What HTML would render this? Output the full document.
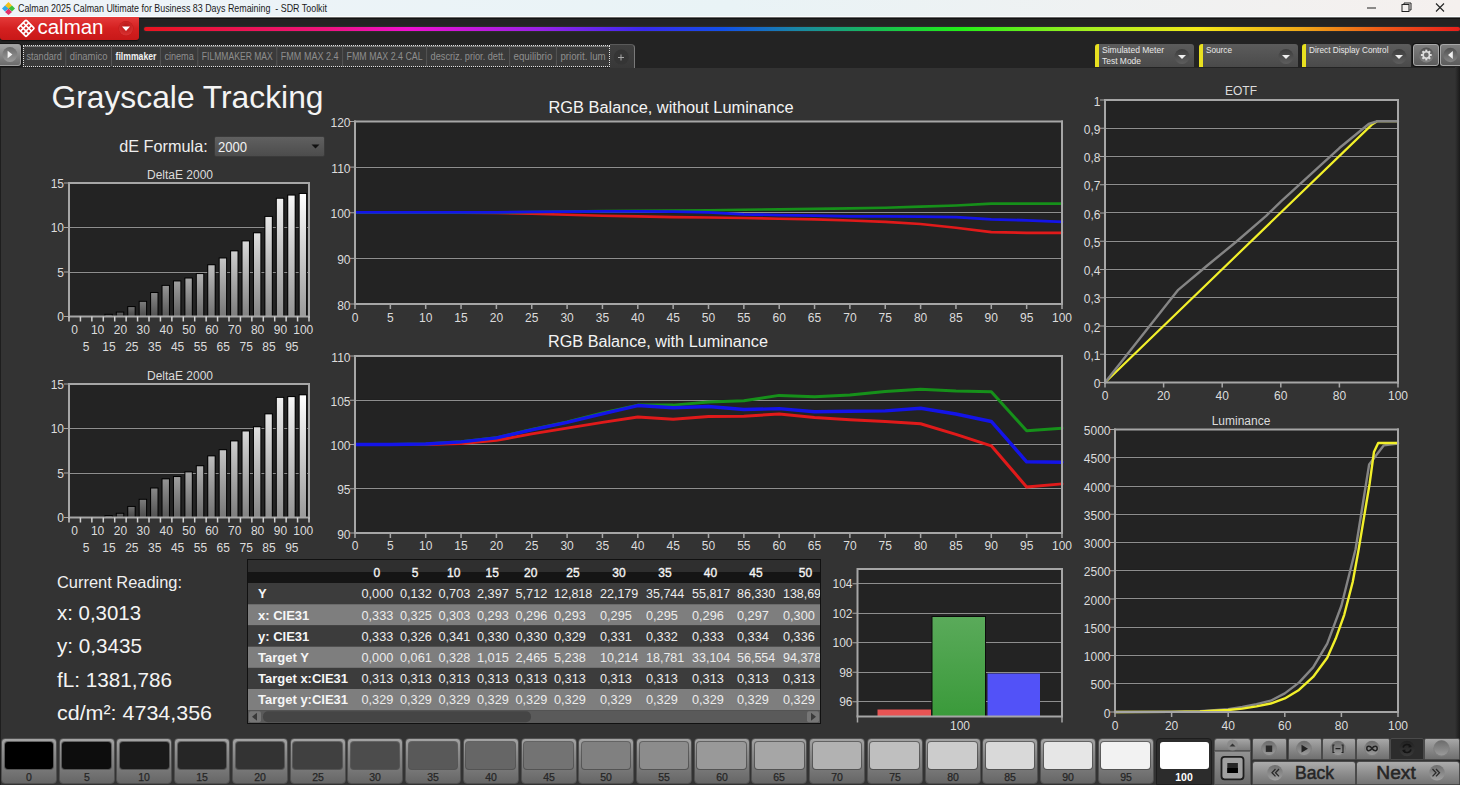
<!DOCTYPE html>
<html><head><meta charset="utf-8">
<style>
*{margin:0;padding:0;box-sizing:border-box}
html,body{width:1460px;height:785px;overflow:hidden;background:#333;font-family:"Liberation Sans",sans-serif}
.a{position:absolute}
svg text{font-family:"Liberation Sans",sans-serif}
</style></head><body>

<div class="a" style="left:0;top:0;width:1460px;height:17px;background:linear-gradient(90deg,#eef3f8,#e9f3f6 50%,#f5f0ee);box-shadow:inset 0 -1px 0 #fbfdfd;"></div>
<svg class="a" style="left:1px;top:1px" width="15" height="15" viewBox="0 0 15 15">
<path d="M7.5 1 L11 4.5 L7.5 8 L4 4.5Z" fill="#f2c21a"/>
<path d="M11 4.5 L14 7.5 L11 10.5 L7.5 7.5Z" fill="#3cbf3c"/>
<path d="M7.5 7.5 L11 11 L7.5 14 L4 11Z" fill="#e0306a"/>
<path d="M4 4.5 L7.5 7.5 L4 10.5 L1 7.5Z" fill="#30a8e8"/>
</svg>
<svg class="a" style="left:0;top:0" width="400" height="17"><text x="18" y="12.3" font-size="11" fill="#1a1a1a" textLength="309" lengthAdjust="spacingAndGlyphs">Calman 2025 Calman Ultimate for Business 83 Days Remaining &#160;- SDR Toolkit</text></svg>
<svg class="a" style="left:1360px;top:0" width="100" height="17">
<rect x="7" y="7.5" width="9" height="1" fill="#222"/>
<rect x="42" y="4.5" width="7" height="7" fill="none" stroke="#222" stroke-width="1"/>
<path d="M44 4.5 V3 H51 V10 H49.5" fill="none" stroke="#222" stroke-width="1"/>
<path d="M76 3.5 L84 11.5 M84 3.5 L76 11.5" stroke="#222" stroke-width="1.1"/>
</svg>
<div class="a" style="left:0;top:17px;width:1460px;height:51px;background:linear-gradient(#6a6a6a 0,#6a6a6a 1px,#121212 1px,#121212 2px,#232323 2px)"></div>
<div class="a" style="left:0;top:17px;width:139px;height:23px;background:linear-gradient(#e53a3a,#d42020 50%,#c81818);border-radius:0 0 3px 3px;box-shadow:0 1px 1px #111"></div>
<svg class="a" style="left:0;top:17px" width="139" height="23" viewBox="0 0 139 23">
<g transform="translate(26,11.3) rotate(45)" fill="none" stroke="#fff" stroke-width="1.7">
<rect x="-5.9" y="-5.9" width="11.8" height="11.8" rx="1"/>
<path d="M-1.97 -5.9 V5.9 M1.97 -5.9 V5.9 M-5.9 -1.97 H5.9 M-5.9 1.97 H5.9"/>
</g>
<text x="37.5" y="17" font-size="19.5" fill="#fff" textLength="66" lengthAdjust="spacingAndGlyphs">calman</text>
<circle cx="126" cy="11.5" r="7.5" fill="#c01a1a"/>
<circle cx="126" cy="11.5" r="7" fill="url(#rg1)"/>
<defs><radialGradient id="rg1" cx="50%" cy="35%" r="60%"><stop offset="0" stop-color="#b81515"/><stop offset="1" stop-color="#d83030"/></radialGradient></defs>
<path d="M122 9.5 H130 L126 14Z" fill="#fff"/>
</svg>
<div class="a" style="left:144px;top:26.5px;width:1316px;height:4px;border-radius:2px;background:linear-gradient(90deg,#e8141e 0%,#ee1480 14%,#f010d0 20%,#9a22e8 30%,#3a2af0 38%,#1250e8 44%,#1a8aa0 50%,#18c050 56%,#22ee18 62%,#a8f020 72%,#f4ea18 80%,#f0a818 88%,#ee5a18 94%,#e8201c 100%);box-shadow:0 0 2px rgba(255,255,255,.15)"></div>
<div class="a" style="left:0;top:44px;width:21px;height:22px;border-radius:0 3px 3px 0;background:linear-gradient(#a4a4a4,#888 50%,#6c6c6c);border:1px solid #a0a0a0;border-left:none;box-shadow:0 0 0 1px #151515"></div>
<svg class="a" style="left:0;top:44px" width="21" height="22"><defs><linearGradient id="pcg" x1="0" y1="0" x2="0" y2="1"><stop offset="0" stop-color="#6a6a6a"/><stop offset="1" stop-color="#9a9a9a"/></linearGradient></defs><circle cx="9.9" cy="10.5" r="7.4" fill="url(#pcg)"/><path d="M7.6 6.8 L12.4 10.5 L7.6 14.2Z" fill="#f4f4f4"/></svg>
<div class="a" style="left:23px;top:45px;width:587px;height:22px;background:#3a3a3a;border:1px dotted #e0e0e0;box-shadow:inset 0 1px 0 #777"></div>
<svg class="a" style="left:0;top:44.5px" width="640" height="23"><text x="26.5" y="14.6" font-size="10" font-weight="normal" fill="#8e8e8e" textLength="35.3" lengthAdjust="spacingAndGlyphs">standard</text><rect x="65.3" y="1" width="1" height="21" fill="#555"/><text x="69.8" y="14.6" font-size="10" font-weight="normal" fill="#8e8e8e" textLength="37.7" lengthAdjust="spacingAndGlyphs">dinamico</text><rect x="111.0" y="1" width="1" height="21" fill="#555"/><text x="115.5" y="14.6" font-size="10" font-weight="bold" fill="#f2f2f2" textLength="40.9" lengthAdjust="spacingAndGlyphs">filmmaker</text><rect x="159.9" y="1" width="1" height="21" fill="#555"/><text x="164.4" y="14.6" font-size="10" font-weight="normal" fill="#8e8e8e" textLength="29.4" lengthAdjust="spacingAndGlyphs">cinema</text><rect x="197.3" y="1" width="1" height="21" fill="#555"/><text x="201.8" y="14.6" font-size="10" font-weight="normal" fill="#8e8e8e" textLength="71.0" lengthAdjust="spacingAndGlyphs">FILMMAKER MAX</text><rect x="276.3" y="1" width="1" height="21" fill="#555"/><text x="280.8" y="14.6" font-size="10" font-weight="normal" fill="#8e8e8e" textLength="57.8" lengthAdjust="spacingAndGlyphs">FMM MAX 2.4</text><rect x="342.1" y="1" width="1" height="21" fill="#555"/><text x="346.6" y="14.6" font-size="10" font-weight="normal" fill="#8e8e8e" textLength="76.0" lengthAdjust="spacingAndGlyphs">FMM MAX 2.4 CAL</text><rect x="426.1" y="1" width="1" height="21" fill="#555"/><text x="430.6" y="14.6" font-size="10" font-weight="normal" fill="#8e8e8e" textLength="75.0" lengthAdjust="spacingAndGlyphs">descriz. prior. dett.</text><rect x="509.1" y="1" width="1" height="21" fill="#555"/><text x="513.6" y="14.6" font-size="10" font-weight="normal" fill="#8e8e8e" textLength="38.8" lengthAdjust="spacingAndGlyphs">equilibrio</text><rect x="555.9" y="1" width="1" height="21" fill="#555"/><text x="560.4" y="14.6" font-size="10" font-weight="normal" fill="#8e8e8e" textLength="45.3" lengthAdjust="spacingAndGlyphs">priorit. lum</text></svg>
<div class="a" style="left:610px;top:44px;width:25px;height:24px;background:linear-gradient(#404040,#383838);border-radius:0 4px 0 0;border-top:1px solid #5a5a5a;border-right:1px solid #7a7a7a"></div>
<svg class="a" style="left:610px;top:44px" width="25" height="24"><circle cx="11.3" cy="13" r="7.5" fill="#353535"/><path d="M8 13.5 H14 M11 10.5 V16.5" stroke="#a8a8a8" stroke-width="1"/></svg>
<div class="a" style="left:1095px;top:44px;width:99px;height:23px;border-radius:3px 3px 0 0;background:linear-gradient(#5c5c5c,#4a4a4a);border-left:4px solid #e8e020"></div><svg class="a" style="left:1095px;top:44px" width="99" height="23"><text x="7" y="9.2" font-size="9.5" fill="#e8e8e8" textLength="62" lengthAdjust="spacingAndGlyphs">Simulated Meter</text><text x="7" y="20.0" font-size="9.5" fill="#e8e8e8" textLength="39" lengthAdjust="spacingAndGlyphs">Test Mode</text><defs><linearGradient id="dcg1095" x1="0" y1="0" x2="0" y2="1"><stop offset="0" stop-color="#3c3c3c"/><stop offset="1" stop-color="#5e5e5e"/></linearGradient></defs><circle cx="87" cy="12.5" r="7.5" fill="url(#dcg1095)"/><path d="M83 11 H91 L87 15Z" fill="#f0f0f0"/></svg>
<div class="a" style="left:1199px;top:44px;width:99px;height:23px;border-radius:3px 3px 0 0;background:linear-gradient(#5c5c5c,#4a4a4a);border-left:4px solid #e8e020"></div><svg class="a" style="left:1199px;top:44px" width="99" height="23"><text x="7" y="9.2" font-size="9.5" fill="#e8e8e8" textLength="26" lengthAdjust="spacingAndGlyphs">Source</text><defs><linearGradient id="dcg1199" x1="0" y1="0" x2="0" y2="1"><stop offset="0" stop-color="#3c3c3c"/><stop offset="1" stop-color="#5e5e5e"/></linearGradient></defs><circle cx="87" cy="12.5" r="7.5" fill="url(#dcg1199)"/><path d="M83 11 H91 L87 15Z" fill="#f0f0f0"/></svg>
<div class="a" style="left:1302px;top:44px;width:109px;height:23px;border-radius:3px 3px 0 0;background:linear-gradient(#5c5c5c,#4a4a4a);border-left:4px solid #e8e020"></div><svg class="a" style="left:1302px;top:44px" width="109" height="23"><text x="7" y="9.2" font-size="9.5" fill="#e8e8e8" textLength="79.5" lengthAdjust="spacingAndGlyphs">Direct Display Control</text><defs><linearGradient id="dcg1302" x1="0" y1="0" x2="0" y2="1"><stop offset="0" stop-color="#3c3c3c"/><stop offset="1" stop-color="#5e5e5e"/></linearGradient></defs><circle cx="97" cy="12.5" r="7.5" fill="url(#dcg1302)"/><path d="M93 11 H101 L97 15Z" fill="#f0f0f0"/></svg>
<div class="a" style="left:1413px;top:44px;width:26px;height:22px;border-radius:3px;background:linear-gradient(#7e7e7e,#5c5c5c);border:1px solid #a8a8a8;box-shadow:0 0 0 1px #111"></div>
<svg class="a" style="left:1413px;top:44px" width="26" height="22"><defs><linearGradient id="gcg" x1="0" y1="0" x2="0" y2="1"><stop offset="0" stop-color="#505050"/><stop offset="1" stop-color="#858585"/></linearGradient></defs>
<circle cx="13.3" cy="11" r="7.4" fill="url(#gcg)"/><g transform="translate(13.3,11)" fill="#dedede">
<circle r="3.9"/><rect x="-1" y="-5.4" width="2" height="2.2" transform="rotate(0)"/><rect x="-1" y="-5.4" width="2" height="2.2" transform="rotate(45)"/><rect x="-1" y="-5.4" width="2" height="2.2" transform="rotate(90)"/><rect x="-1" y="-5.4" width="2" height="2.2" transform="rotate(135)"/><rect x="-1" y="-5.4" width="2" height="2.2" transform="rotate(180)"/><rect x="-1" y="-5.4" width="2" height="2.2" transform="rotate(225)"/><rect x="-1" y="-5.4" width="2" height="2.2" transform="rotate(270)"/><rect x="-1" y="-5.4" width="2" height="2.2" transform="rotate(315)"/><circle r="2.4" fill="#6c6c6c"/></g></svg>
<div class="a" style="left:1440px;top:44px;width:20px;height:22px;border-radius:3px 0 0 3px;background:linear-gradient(#7e7e7e,#5c5c5c);border:1px solid #a8a8a8;border-right:none"></div>
<svg class="a" style="left:1440px;top:44px" width="20" height="22"><circle cx="10.5" cy="11" r="7.2" fill="url(#gcg)"/><path d="M12.8 7 L8 11 L12.8 15Z" fill="#f0f0f0"/></svg>
<div class="a" style="left:0;top:67px;width:1px;height:718px;background:#1e1e1e"></div>
<div class="a" style="left:1455px;top:67px;width:5px;height:718px;background:linear-gradient(90deg,#333,#1a1a1a)"></div>
<svg class="a" style="left:0;top:67px" width="340" height="100">
<text x="51.5" y="41" font-size="31.5" fill="#f4f4f4" textLength="272" lengthAdjust="spacingAndGlyphs">Grayscale Tracking</text>
<text x="119.2" y="85" font-size="16.5" fill="#eeeeee" textLength="88.5" lengthAdjust="spacingAndGlyphs">dE Formula:</text>
</svg>
<div class="a" style="left:214px;top:136px;width:111px;height:21px;background:linear-gradient(#606060,#4c4c4c);border:1px solid #3a3a3a;border-radius:2px"></div>
<svg class="a" style="left:214px;top:136px" width="111" height="21"><text x="4" y="16.3" font-size="14" fill="#f0f0f0" textLength="29" lengthAdjust="spacingAndGlyphs">2000</text><path d="M97.5 8.5 H105.5 L101.5 12.5Z" fill="#111"/></svg>
<svg class="a" style="left:0;top:160px" width="330" height="200"><text x="180" y="19" font-size="12" fill="#dcdcdc" text-anchor="middle">DeltaE 2000</text><rect x="69" y="23" width="240" height="133.5" fill="#232323"/><rect x="69" y="111.70" width="240" height="1.6" fill="#1c1c1c"/><rect x="69" y="112" width="240" height="1" fill="#8e8e8e"/><rect x="69" y="66.70" width="240" height="1.6" fill="#1c1c1c"/><rect x="69" y="67" width="240" height="1" fill="#8e8e8e"/><defs><linearGradient id="bg183_0" x1="0" y1="0" x2="0" y2="1"><stop offset="0" stop-color="rgb(42,42,42)"/><stop offset="1" stop-color="rgb(25,25,25)"/></linearGradient><linearGradient id="bg183_1" x1="0" y1="0" x2="0" y2="1"><stop offset="0" stop-color="rgb(42,42,42)"/><stop offset="1" stop-color="rgb(25,25,25)"/></linearGradient><linearGradient id="bg183_2" x1="0" y1="0" x2="0" y2="1"><stop offset="0" stop-color="rgb(64,64,64)"/><stop offset="1" stop-color="rgb(38,38,38)"/></linearGradient><linearGradient id="bg183_3" x1="0" y1="0" x2="0" y2="1"><stop offset="0" stop-color="rgb(82,82,82)"/><stop offset="1" stop-color="rgb(49,49,49)"/></linearGradient><linearGradient id="bg183_4" x1="0" y1="0" x2="0" y2="1"><stop offset="0" stop-color="rgb(97,97,97)"/><stop offset="1" stop-color="rgb(58,58,58)"/></linearGradient><linearGradient id="bg183_5" x1="0" y1="0" x2="0" y2="1"><stop offset="0" stop-color="rgb(111,111,111)"/><stop offset="1" stop-color="rgb(67,67,67)"/></linearGradient><linearGradient id="bg183_6" x1="0" y1="0" x2="0" y2="1"><stop offset="0" stop-color="rgb(124,124,124)"/><stop offset="1" stop-color="rgb(74,74,74)"/></linearGradient><linearGradient id="bg183_7" x1="0" y1="0" x2="0" y2="1"><stop offset="0" stop-color="rgb(136,136,136)"/><stop offset="1" stop-color="rgb(81,81,81)"/></linearGradient><linearGradient id="bg183_8" x1="0" y1="0" x2="0" y2="1"><stop offset="0" stop-color="rgb(147,147,147)"/><stop offset="1" stop-color="rgb(88,88,88)"/></linearGradient><linearGradient id="bg183_9" x1="0" y1="0" x2="0" y2="1"><stop offset="0" stop-color="rgb(158,158,158)"/><stop offset="1" stop-color="rgb(95,95,95)"/></linearGradient><linearGradient id="bg183_10" x1="0" y1="0" x2="0" y2="1"><stop offset="0" stop-color="rgb(168,168,168)"/><stop offset="1" stop-color="rgb(101,101,101)"/></linearGradient><linearGradient id="bg183_11" x1="0" y1="0" x2="0" y2="1"><stop offset="0" stop-color="rgb(178,178,178)"/><stop offset="1" stop-color="rgb(107,107,107)"/></linearGradient><linearGradient id="bg183_12" x1="0" y1="0" x2="0" y2="1"><stop offset="0" stop-color="rgb(188,188,188)"/><stop offset="1" stop-color="rgb(113,113,113)"/></linearGradient><linearGradient id="bg183_13" x1="0" y1="0" x2="0" y2="1"><stop offset="0" stop-color="rgb(197,197,197)"/><stop offset="1" stop-color="rgb(118,118,118)"/></linearGradient><linearGradient id="bg183_14" x1="0" y1="0" x2="0" y2="1"><stop offset="0" stop-color="rgb(206,206,206)"/><stop offset="1" stop-color="rgb(124,124,124)"/></linearGradient><linearGradient id="bg183_15" x1="0" y1="0" x2="0" y2="1"><stop offset="0" stop-color="rgb(215,215,215)"/><stop offset="1" stop-color="rgb(129,129,129)"/></linearGradient><linearGradient id="bg183_16" x1="0" y1="0" x2="0" y2="1"><stop offset="0" stop-color="rgb(223,223,223)"/><stop offset="1" stop-color="rgb(134,134,134)"/></linearGradient><linearGradient id="bg183_17" x1="0" y1="0" x2="0" y2="1"><stop offset="0" stop-color="rgb(231,231,231)"/><stop offset="1" stop-color="rgb(139,139,139)"/></linearGradient><linearGradient id="bg183_18" x1="0" y1="0" x2="0" y2="1"><stop offset="0" stop-color="rgb(239,239,239)"/><stop offset="1" stop-color="rgb(144,144,144)"/></linearGradient><linearGradient id="bg183_19" x1="0" y1="0" x2="0" y2="1"><stop offset="0" stop-color="rgb(247,247,247)"/><stop offset="1" stop-color="rgb(148,148,148)"/></linearGradient><linearGradient id="bg183_20" x1="0" y1="0" x2="0" y2="1"><stop offset="0" stop-color="rgb(255,255,255)"/><stop offset="1" stop-color="rgb(153,153,153)"/></linearGradient></defs><rect x="104.40" y="153.83" width="8.4" height="2.67" fill="#000"/><rect x="105.40" y="154.83" width="6.4" height="1.67" fill="url(#bg183_3)"/><rect x="115.83" y="151.61" width="8.4" height="4.90" fill="#000"/><rect x="116.83" y="152.61" width="6.4" height="3.90" fill="url(#bg183_4)"/><rect x="127.26" y="146.09" width="8.4" height="10.41" fill="#000"/><rect x="128.26" y="147.09" width="6.4" height="9.41" fill="url(#bg183_5)"/><rect x="138.69" y="140.84" width="8.4" height="15.66" fill="#000"/><rect x="139.69" y="141.84" width="6.4" height="14.66" fill="url(#bg183_6)"/><rect x="150.11" y="132.02" width="8.4" height="24.48" fill="#000"/><rect x="151.11" y="133.02" width="6.4" height="23.48" fill="url(#bg183_7)"/><rect x="161.54" y="124.90" width="8.4" height="31.60" fill="#000"/><rect x="162.54" y="125.90" width="6.4" height="30.60" fill="url(#bg183_8)"/><rect x="172.97" y="120.45" width="8.4" height="36.04" fill="#000"/><rect x="173.97" y="121.45" width="6.4" height="35.04" fill="url(#bg183_9)"/><rect x="184.40" y="117.52" width="8.4" height="38.98" fill="#000"/><rect x="185.40" y="118.52" width="6.4" height="37.98" fill="url(#bg183_10)"/><rect x="195.83" y="113.07" width="8.4" height="43.43" fill="#000"/><rect x="196.83" y="114.07" width="6.4" height="42.43" fill="url(#bg183_11)"/><rect x="207.26" y="104.26" width="8.4" height="52.24" fill="#000"/><rect x="208.26" y="105.26" width="6.4" height="51.24" fill="url(#bg183_12)"/><rect x="218.69" y="97.49" width="8.4" height="59.01" fill="#000"/><rect x="219.69" y="98.49" width="6.4" height="58.01" fill="url(#bg183_13)"/><rect x="230.11" y="90.37" width="8.4" height="66.13" fill="#000"/><rect x="231.11" y="91.37" width="6.4" height="65.13" fill="url(#bg183_14)"/><rect x="241.54" y="80.41" width="8.4" height="76.09" fill="#000"/><rect x="242.54" y="81.41" width="6.4" height="75.09" fill="url(#bg183_15)"/><rect x="252.97" y="72.31" width="8.4" height="84.19" fill="#000"/><rect x="253.97" y="73.31" width="6.4" height="83.19" fill="url(#bg183_16)"/><rect x="264.40" y="55.93" width="8.4" height="100.57" fill="#000"/><rect x="265.40" y="56.93" width="6.4" height="99.57" fill="url(#bg183_17)"/><rect x="275.83" y="37.77" width="8.4" height="118.73" fill="#000"/><rect x="276.83" y="38.77" width="6.4" height="117.73" fill="url(#bg183_18)"/><rect x="287.26" y="34.57" width="8.4" height="121.93" fill="#000"/><rect x="288.26" y="35.57" width="6.4" height="120.93" fill="url(#bg183_19)"/><rect x="298.69" y="32.97" width="8.4" height="123.53" fill="#000"/><rect x="299.69" y="33.97" width="6.4" height="122.53" fill="url(#bg183_20)"/><path d="M69 156.5 V23 H309 V156.5" fill="none" stroke="#a6a6a6" stroke-width="2"/><rect x="68" y="155.5" width="242" height="2" fill="#a6a6a6"/><rect x="64" y="156.00" width="5" height="1" fill="#a6a6a6"/><text x="64" y="161.10" font-size="12" fill="#dcdcdc" text-anchor="end">0</text><rect x="64" y="111.50" width="5" height="1" fill="#a6a6a6"/><text x="64" y="116.60" font-size="12" fill="#dcdcdc" text-anchor="end">5</text><rect x="64" y="67.00" width="5" height="1" fill="#a6a6a6"/><text x="64" y="72.10" font-size="12" fill="#dcdcdc" text-anchor="end">10</text><rect x="64" y="22.50" width="5" height="1" fill="#a6a6a6"/><text x="64" y="27.60" font-size="12" fill="#dcdcdc" text-anchor="end">15</text><rect x="68.25" y="156.5" width="1.5" height="5" fill="#d0d0d0"/><rect x="79.68" y="156.5" width="1.5" height="5" fill="#d0d0d0"/><rect x="91.11" y="156.5" width="1.5" height="5" fill="#d0d0d0"/><rect x="102.54" y="156.5" width="1.5" height="5" fill="#d0d0d0"/><rect x="113.96" y="156.5" width="1.5" height="5" fill="#d0d0d0"/><rect x="125.39" y="156.5" width="1.5" height="5" fill="#d0d0d0"/><rect x="136.82" y="156.5" width="1.5" height="5" fill="#d0d0d0"/><rect x="148.25" y="156.5" width="1.5" height="5" fill="#d0d0d0"/><rect x="159.68" y="156.5" width="1.5" height="5" fill="#d0d0d0"/><rect x="171.11" y="156.5" width="1.5" height="5" fill="#d0d0d0"/><rect x="182.54" y="156.5" width="1.5" height="5" fill="#d0d0d0"/><rect x="193.96" y="156.5" width="1.5" height="5" fill="#d0d0d0"/><rect x="205.39" y="156.5" width="1.5" height="5" fill="#d0d0d0"/><rect x="216.82" y="156.5" width="1.5" height="5" fill="#d0d0d0"/><rect x="228.25" y="156.5" width="1.5" height="5" fill="#d0d0d0"/><rect x="239.68" y="156.5" width="1.5" height="5" fill="#d0d0d0"/><rect x="251.11" y="156.5" width="1.5" height="5" fill="#d0d0d0"/><rect x="262.54" y="156.5" width="1.5" height="5" fill="#d0d0d0"/><rect x="273.96" y="156.5" width="1.5" height="5" fill="#d0d0d0"/><rect x="285.39" y="156.5" width="1.5" height="5" fill="#d0d0d0"/><rect x="296.82" y="156.5" width="1.5" height="5" fill="#d0d0d0"/><rect x="308.25" y="156.5" width="1.5" height="5" fill="#d0d0d0"/><text x="74.71" y="173.5" font-size="12" fill="#dcdcdc" text-anchor="middle">0</text><text x="86.14" y="190.5" font-size="12" fill="#dcdcdc" text-anchor="middle">5</text><text x="97.57" y="173.5" font-size="12" fill="#dcdcdc" text-anchor="middle">10</text><text x="109.00" y="190.5" font-size="12" fill="#dcdcdc" text-anchor="middle">15</text><text x="120.43" y="173.5" font-size="12" fill="#dcdcdc" text-anchor="middle">20</text><text x="131.86" y="190.5" font-size="12" fill="#dcdcdc" text-anchor="middle">25</text><text x="143.29" y="173.5" font-size="12" fill="#dcdcdc" text-anchor="middle">30</text><text x="154.71" y="190.5" font-size="12" fill="#dcdcdc" text-anchor="middle">35</text><text x="166.14" y="173.5" font-size="12" fill="#dcdcdc" text-anchor="middle">40</text><text x="177.57" y="190.5" font-size="12" fill="#dcdcdc" text-anchor="middle">45</text><text x="189.00" y="173.5" font-size="12" fill="#dcdcdc" text-anchor="middle">50</text><text x="200.43" y="190.5" font-size="12" fill="#dcdcdc" text-anchor="middle">55</text><text x="211.86" y="173.5" font-size="12" fill="#dcdcdc" text-anchor="middle">60</text><text x="223.29" y="190.5" font-size="12" fill="#dcdcdc" text-anchor="middle">65</text><text x="234.71" y="173.5" font-size="12" fill="#dcdcdc" text-anchor="middle">70</text><text x="246.14" y="190.5" font-size="12" fill="#dcdcdc" text-anchor="middle">75</text><text x="257.57" y="173.5" font-size="12" fill="#dcdcdc" text-anchor="middle">80</text><text x="269.00" y="190.5" font-size="12" fill="#dcdcdc" text-anchor="middle">85</text><text x="280.43" y="173.5" font-size="12" fill="#dcdcdc" text-anchor="middle">90</text><text x="291.86" y="190.5" font-size="12" fill="#dcdcdc" text-anchor="middle">95</text><text x="303.29" y="173.5" font-size="12" fill="#dcdcdc" text-anchor="middle">100</text></svg>
<svg class="a" style="left:0;top:361px" width="330" height="200"><text x="180" y="19" font-size="12" fill="#dcdcdc" text-anchor="middle">DeltaE 2000</text><rect x="69" y="23" width="240" height="133.5" fill="#232323"/><rect x="69" y="111.70" width="240" height="1.6" fill="#1c1c1c"/><rect x="69" y="112" width="240" height="1" fill="#8e8e8e"/><rect x="69" y="66.70" width="240" height="1.6" fill="#1c1c1c"/><rect x="69" y="67" width="240" height="1" fill="#8e8e8e"/><defs><linearGradient id="bg384_0" x1="0" y1="0" x2="0" y2="1"><stop offset="0" stop-color="rgb(42,42,42)"/><stop offset="1" stop-color="rgb(25,25,25)"/></linearGradient><linearGradient id="bg384_1" x1="0" y1="0" x2="0" y2="1"><stop offset="0" stop-color="rgb(42,42,42)"/><stop offset="1" stop-color="rgb(25,25,25)"/></linearGradient><linearGradient id="bg384_2" x1="0" y1="0" x2="0" y2="1"><stop offset="0" stop-color="rgb(64,64,64)"/><stop offset="1" stop-color="rgb(38,38,38)"/></linearGradient><linearGradient id="bg384_3" x1="0" y1="0" x2="0" y2="1"><stop offset="0" stop-color="rgb(82,82,82)"/><stop offset="1" stop-color="rgb(49,49,49)"/></linearGradient><linearGradient id="bg384_4" x1="0" y1="0" x2="0" y2="1"><stop offset="0" stop-color="rgb(97,97,97)"/><stop offset="1" stop-color="rgb(58,58,58)"/></linearGradient><linearGradient id="bg384_5" x1="0" y1="0" x2="0" y2="1"><stop offset="0" stop-color="rgb(111,111,111)"/><stop offset="1" stop-color="rgb(67,67,67)"/></linearGradient><linearGradient id="bg384_6" x1="0" y1="0" x2="0" y2="1"><stop offset="0" stop-color="rgb(124,124,124)"/><stop offset="1" stop-color="rgb(74,74,74)"/></linearGradient><linearGradient id="bg384_7" x1="0" y1="0" x2="0" y2="1"><stop offset="0" stop-color="rgb(136,136,136)"/><stop offset="1" stop-color="rgb(81,81,81)"/></linearGradient><linearGradient id="bg384_8" x1="0" y1="0" x2="0" y2="1"><stop offset="0" stop-color="rgb(147,147,147)"/><stop offset="1" stop-color="rgb(88,88,88)"/></linearGradient><linearGradient id="bg384_9" x1="0" y1="0" x2="0" y2="1"><stop offset="0" stop-color="rgb(158,158,158)"/><stop offset="1" stop-color="rgb(95,95,95)"/></linearGradient><linearGradient id="bg384_10" x1="0" y1="0" x2="0" y2="1"><stop offset="0" stop-color="rgb(168,168,168)"/><stop offset="1" stop-color="rgb(101,101,101)"/></linearGradient><linearGradient id="bg384_11" x1="0" y1="0" x2="0" y2="1"><stop offset="0" stop-color="rgb(178,178,178)"/><stop offset="1" stop-color="rgb(107,107,107)"/></linearGradient><linearGradient id="bg384_12" x1="0" y1="0" x2="0" y2="1"><stop offset="0" stop-color="rgb(188,188,188)"/><stop offset="1" stop-color="rgb(113,113,113)"/></linearGradient><linearGradient id="bg384_13" x1="0" y1="0" x2="0" y2="1"><stop offset="0" stop-color="rgb(197,197,197)"/><stop offset="1" stop-color="rgb(118,118,118)"/></linearGradient><linearGradient id="bg384_14" x1="0" y1="0" x2="0" y2="1"><stop offset="0" stop-color="rgb(206,206,206)"/><stop offset="1" stop-color="rgb(124,124,124)"/></linearGradient><linearGradient id="bg384_15" x1="0" y1="0" x2="0" y2="1"><stop offset="0" stop-color="rgb(215,215,215)"/><stop offset="1" stop-color="rgb(129,129,129)"/></linearGradient><linearGradient id="bg384_16" x1="0" y1="0" x2="0" y2="1"><stop offset="0" stop-color="rgb(223,223,223)"/><stop offset="1" stop-color="rgb(134,134,134)"/></linearGradient><linearGradient id="bg384_17" x1="0" y1="0" x2="0" y2="1"><stop offset="0" stop-color="rgb(231,231,231)"/><stop offset="1" stop-color="rgb(139,139,139)"/></linearGradient><linearGradient id="bg384_18" x1="0" y1="0" x2="0" y2="1"><stop offset="0" stop-color="rgb(239,239,239)"/><stop offset="1" stop-color="rgb(144,144,144)"/></linearGradient><linearGradient id="bg384_19" x1="0" y1="0" x2="0" y2="1"><stop offset="0" stop-color="rgb(247,247,247)"/><stop offset="1" stop-color="rgb(148,148,148)"/></linearGradient><linearGradient id="bg384_20" x1="0" y1="0" x2="0" y2="1"><stop offset="0" stop-color="rgb(255,255,255)"/><stop offset="1" stop-color="rgb(153,153,153)"/></linearGradient></defs><rect x="104.40" y="154.10" width="8.4" height="2.40" fill="#000"/><rect x="105.40" y="155.10" width="6.4" height="1.40" fill="url(#bg384_3)"/><rect x="115.83" y="151.78" width="8.4" height="4.72" fill="#000"/><rect x="116.83" y="152.78" width="6.4" height="3.72" fill="url(#bg384_4)"/><rect x="127.26" y="144.93" width="8.4" height="11.57" fill="#000"/><rect x="128.26" y="145.93" width="6.4" height="10.57" fill="url(#bg384_5)"/><rect x="138.69" y="137.81" width="8.4" height="18.69" fill="#000"/><rect x="139.69" y="138.81" width="6.4" height="17.69" fill="url(#bg384_6)"/><rect x="150.11" y="126.51" width="8.4" height="29.99" fill="#000"/><rect x="151.11" y="127.51" width="6.4" height="28.99" fill="url(#bg384_7)"/><rect x="161.54" y="117.34" width="8.4" height="39.16" fill="#000"/><rect x="162.54" y="118.34" width="6.4" height="38.16" fill="url(#bg384_8)"/><rect x="172.97" y="115.03" width="8.4" height="41.47" fill="#000"/><rect x="173.97" y="116.03" width="6.4" height="40.47" fill="url(#bg384_9)"/><rect x="184.40" y="110.40" width="8.4" height="46.10" fill="#000"/><rect x="185.40" y="111.40" width="6.4" height="45.10" fill="url(#bg384_10)"/><rect x="195.83" y="104.26" width="8.4" height="52.24" fill="#000"/><rect x="196.83" y="105.26" width="6.4" height="51.24" fill="url(#bg384_11)"/><rect x="207.26" y="94.38" width="8.4" height="62.12" fill="#000"/><rect x="208.26" y="95.38" width="6.4" height="61.12" fill="url(#bg384_12)"/><rect x="218.69" y="88.24" width="8.4" height="68.26" fill="#000"/><rect x="219.69" y="89.24" width="6.4" height="67.26" fill="url(#bg384_13)"/><rect x="230.11" y="79.43" width="8.4" height="77.07" fill="#000"/><rect x="231.11" y="80.43" width="6.4" height="76.07" fill="url(#bg384_14)"/><rect x="241.54" y="69.46" width="8.4" height="87.04" fill="#000"/><rect x="242.54" y="70.46" width="6.4" height="86.04" fill="url(#bg384_15)"/><rect x="252.97" y="65.27" width="8.4" height="91.22" fill="#000"/><rect x="253.97" y="66.27" width="6.4" height="90.22" fill="url(#bg384_16)"/><rect x="264.40" y="52.37" width="8.4" height="104.13" fill="#000"/><rect x="265.40" y="53.37" width="6.4" height="103.13" fill="url(#bg384_17)"/><rect x="275.83" y="35.90" width="8.4" height="120.59" fill="#000"/><rect x="276.83" y="36.90" width="6.4" height="119.59" fill="url(#bg384_18)"/><rect x="287.26" y="35.10" width="8.4" height="121.40" fill="#000"/><rect x="288.26" y="36.10" width="6.4" height="120.40" fill="url(#bg384_19)"/><rect x="298.69" y="33.32" width="8.4" height="123.18" fill="#000"/><rect x="299.69" y="34.32" width="6.4" height="122.18" fill="url(#bg384_20)"/><path d="M69 156.5 V23 H309 V156.5" fill="none" stroke="#a6a6a6" stroke-width="2"/><rect x="68" y="155.5" width="242" height="2" fill="#a6a6a6"/><rect x="64" y="156.00" width="5" height="1" fill="#a6a6a6"/><text x="64" y="161.10" font-size="12" fill="#dcdcdc" text-anchor="end">0</text><rect x="64" y="111.50" width="5" height="1" fill="#a6a6a6"/><text x="64" y="116.60" font-size="12" fill="#dcdcdc" text-anchor="end">5</text><rect x="64" y="67.00" width="5" height="1" fill="#a6a6a6"/><text x="64" y="72.10" font-size="12" fill="#dcdcdc" text-anchor="end">10</text><rect x="64" y="22.50" width="5" height="1" fill="#a6a6a6"/><text x="64" y="27.60" font-size="12" fill="#dcdcdc" text-anchor="end">15</text><rect x="68.25" y="156.5" width="1.5" height="5" fill="#d0d0d0"/><rect x="79.68" y="156.5" width="1.5" height="5" fill="#d0d0d0"/><rect x="91.11" y="156.5" width="1.5" height="5" fill="#d0d0d0"/><rect x="102.54" y="156.5" width="1.5" height="5" fill="#d0d0d0"/><rect x="113.96" y="156.5" width="1.5" height="5" fill="#d0d0d0"/><rect x="125.39" y="156.5" width="1.5" height="5" fill="#d0d0d0"/><rect x="136.82" y="156.5" width="1.5" height="5" fill="#d0d0d0"/><rect x="148.25" y="156.5" width="1.5" height="5" fill="#d0d0d0"/><rect x="159.68" y="156.5" width="1.5" height="5" fill="#d0d0d0"/><rect x="171.11" y="156.5" width="1.5" height="5" fill="#d0d0d0"/><rect x="182.54" y="156.5" width="1.5" height="5" fill="#d0d0d0"/><rect x="193.96" y="156.5" width="1.5" height="5" fill="#d0d0d0"/><rect x="205.39" y="156.5" width="1.5" height="5" fill="#d0d0d0"/><rect x="216.82" y="156.5" width="1.5" height="5" fill="#d0d0d0"/><rect x="228.25" y="156.5" width="1.5" height="5" fill="#d0d0d0"/><rect x="239.68" y="156.5" width="1.5" height="5" fill="#d0d0d0"/><rect x="251.11" y="156.5" width="1.5" height="5" fill="#d0d0d0"/><rect x="262.54" y="156.5" width="1.5" height="5" fill="#d0d0d0"/><rect x="273.96" y="156.5" width="1.5" height="5" fill="#d0d0d0"/><rect x="285.39" y="156.5" width="1.5" height="5" fill="#d0d0d0"/><rect x="296.82" y="156.5" width="1.5" height="5" fill="#d0d0d0"/><rect x="308.25" y="156.5" width="1.5" height="5" fill="#d0d0d0"/><text x="74.71" y="173.5" font-size="12" fill="#dcdcdc" text-anchor="middle">0</text><text x="86.14" y="190.5" font-size="12" fill="#dcdcdc" text-anchor="middle">5</text><text x="97.57" y="173.5" font-size="12" fill="#dcdcdc" text-anchor="middle">10</text><text x="109.00" y="190.5" font-size="12" fill="#dcdcdc" text-anchor="middle">15</text><text x="120.43" y="173.5" font-size="12" fill="#dcdcdc" text-anchor="middle">20</text><text x="131.86" y="190.5" font-size="12" fill="#dcdcdc" text-anchor="middle">25</text><text x="143.29" y="173.5" font-size="12" fill="#dcdcdc" text-anchor="middle">30</text><text x="154.71" y="190.5" font-size="12" fill="#dcdcdc" text-anchor="middle">35</text><text x="166.14" y="173.5" font-size="12" fill="#dcdcdc" text-anchor="middle">40</text><text x="177.57" y="190.5" font-size="12" fill="#dcdcdc" text-anchor="middle">45</text><text x="189.00" y="173.5" font-size="12" fill="#dcdcdc" text-anchor="middle">50</text><text x="200.43" y="190.5" font-size="12" fill="#dcdcdc" text-anchor="middle">55</text><text x="211.86" y="173.5" font-size="12" fill="#dcdcdc" text-anchor="middle">60</text><text x="223.29" y="190.5" font-size="12" fill="#dcdcdc" text-anchor="middle">65</text><text x="234.71" y="173.5" font-size="12" fill="#dcdcdc" text-anchor="middle">70</text><text x="246.14" y="190.5" font-size="12" fill="#dcdcdc" text-anchor="middle">75</text><text x="257.57" y="173.5" font-size="12" fill="#dcdcdc" text-anchor="middle">80</text><text x="269.00" y="190.5" font-size="12" fill="#dcdcdc" text-anchor="middle">85</text><text x="280.43" y="173.5" font-size="12" fill="#dcdcdc" text-anchor="middle">90</text><text x="291.86" y="190.5" font-size="12" fill="#dcdcdc" text-anchor="middle">95</text><text x="303.29" y="173.5" font-size="12" fill="#dcdcdc" text-anchor="middle">100</text></svg>
<svg class="a" style="left:0;top:95px" width="1460" height="240"><text x="671" y="18" font-size="16" fill="#f4f4f4" text-anchor="middle" textLength="245" lengthAdjust="spacingAndGlyphs">RGB Balance, without Luminance</text><rect x="355" y="26.5" width="707" height="182.5" fill="#232323"/><rect x="355" y="162.70" width="707" height="1.6" fill="#1c1c1c"/><rect x="355" y="163" width="707" height="1" fill="#8e8e8e"/><rect x="355" y="116.70" width="707" height="1.6" fill="#1c1c1c"/><rect x="355" y="117" width="707" height="1" fill="#8e8e8e"/><rect x="355" y="71.70" width="707" height="1.6" fill="#1c1c1c"/><rect x="355" y="72" width="707" height="1" fill="#8e8e8e"/><path d="M355.00 117.75 L390.35 117.75 L425.70 117.75 L461.05 117.75 L496.40 117.98 L531.75 118.66 L567.10 119.80 L602.45 120.72 L637.80 121.40 L673.15 122.08 L708.50 122.54 L743.85 123.00 L779.20 123.68 L814.55 124.37 L849.90 125.51 L885.25 126.88 L920.60 128.93 L955.95 132.81 L991.30 137.14 L1026.65 137.83 L1062.00 137.83" fill="none" stroke="#e01a1a" stroke-width="2.6" stroke-linejoin="round" stroke-linecap="round"/><path d="M355.00 117.75 L390.35 117.75 L425.70 117.75 L461.05 117.75 L496.40 117.52 L531.75 117.07 L567.10 116.61 L602.45 116.15 L637.80 115.92 L673.15 115.47 L708.50 115.24 L743.85 114.78 L779.20 114.33 L814.55 113.87 L849.90 113.42 L885.25 112.73 L920.60 111.59 L955.95 110.45 L991.30 108.62 L1026.65 108.62 L1062.00 108.62" fill="none" stroke="#16901a" stroke-width="2.6" stroke-linejoin="round" stroke-linecap="round"/><path d="M355.00 117.29 L390.35 117.29 L425.70 117.29 L461.05 117.29 L496.40 117.29 L531.75 116.84 L567.10 116.61 L602.45 116.38 L637.80 116.38 L673.15 116.61 L708.50 117.29 L743.85 119.35 L779.20 120.03 L814.55 120.72 L849.90 121.40 L885.25 121.40 L920.60 121.63 L955.95 122.08 L991.30 124.37 L1026.65 125.28 L1062.00 126.88" fill="none" stroke="#1414e8" stroke-width="2.8" stroke-linejoin="round" stroke-linecap="round"/><rect x="354" y="25.5" width="709" height="2" fill="#a6a6a6"/><rect x="354" y="25.5" width="2" height="184.5" fill="#a6a6a6"/><rect x="1061" y="25.5" width="2" height="184.5" fill="#a6a6a6"/><rect x="354" y="208" width="709" height="2" fill="#a6a6a6"/><rect x="350" y="208.50" width="5" height="1" fill="#a6a6a6"/><text x="350.5" y="214.70" font-size="12" fill="#dcdcdc" text-anchor="end">80</text><rect x="350" y="162.88" width="5" height="1" fill="#a6a6a6"/><text x="350.5" y="169.07" font-size="12" fill="#dcdcdc" text-anchor="end">90</text><rect x="350" y="117.25" width="5" height="1" fill="#a6a6a6"/><text x="350.5" y="123.45" font-size="12" fill="#dcdcdc" text-anchor="end">100</text><rect x="350" y="71.62" width="5" height="1" fill="#a6a6a6"/><text x="350.5" y="77.83" font-size="12" fill="#dcdcdc" text-anchor="end">110</text><rect x="350" y="26.00" width="5" height="1" fill="#a6a6a6"/><text x="350.5" y="32.20" font-size="12" fill="#dcdcdc" text-anchor="end">120</text><rect x="354.25" y="209" width="1.5" height="5" fill="#a6a6a6"/><text x="355.00" y="226.90" font-size="12" fill="#dcdcdc" text-anchor="middle">0</text><rect x="389.60" y="209" width="1.5" height="5" fill="#a6a6a6"/><text x="390.35" y="226.90" font-size="12" fill="#dcdcdc" text-anchor="middle">5</text><rect x="424.95" y="209" width="1.5" height="5" fill="#a6a6a6"/><text x="425.70" y="226.90" font-size="12" fill="#dcdcdc" text-anchor="middle">10</text><rect x="460.30" y="209" width="1.5" height="5" fill="#a6a6a6"/><text x="461.05" y="226.90" font-size="12" fill="#dcdcdc" text-anchor="middle">15</text><rect x="495.65" y="209" width="1.5" height="5" fill="#a6a6a6"/><text x="496.40" y="226.90" font-size="12" fill="#dcdcdc" text-anchor="middle">20</text><rect x="531.00" y="209" width="1.5" height="5" fill="#a6a6a6"/><text x="531.75" y="226.90" font-size="12" fill="#dcdcdc" text-anchor="middle">25</text><rect x="566.35" y="209" width="1.5" height="5" fill="#a6a6a6"/><text x="567.10" y="226.90" font-size="12" fill="#dcdcdc" text-anchor="middle">30</text><rect x="601.70" y="209" width="1.5" height="5" fill="#a6a6a6"/><text x="602.45" y="226.90" font-size="12" fill="#dcdcdc" text-anchor="middle">35</text><rect x="637.05" y="209" width="1.5" height="5" fill="#a6a6a6"/><text x="637.80" y="226.90" font-size="12" fill="#dcdcdc" text-anchor="middle">40</text><rect x="672.40" y="209" width="1.5" height="5" fill="#a6a6a6"/><text x="673.15" y="226.90" font-size="12" fill="#dcdcdc" text-anchor="middle">45</text><rect x="707.75" y="209" width="1.5" height="5" fill="#a6a6a6"/><text x="708.50" y="226.90" font-size="12" fill="#dcdcdc" text-anchor="middle">50</text><rect x="743.10" y="209" width="1.5" height="5" fill="#a6a6a6"/><text x="743.85" y="226.90" font-size="12" fill="#dcdcdc" text-anchor="middle">55</text><rect x="778.45" y="209" width="1.5" height="5" fill="#a6a6a6"/><text x="779.20" y="226.90" font-size="12" fill="#dcdcdc" text-anchor="middle">60</text><rect x="813.80" y="209" width="1.5" height="5" fill="#a6a6a6"/><text x="814.55" y="226.90" font-size="12" fill="#dcdcdc" text-anchor="middle">65</text><rect x="849.15" y="209" width="1.5" height="5" fill="#a6a6a6"/><text x="849.90" y="226.90" font-size="12" fill="#dcdcdc" text-anchor="middle">70</text><rect x="884.50" y="209" width="1.5" height="5" fill="#a6a6a6"/><text x="885.25" y="226.90" font-size="12" fill="#dcdcdc" text-anchor="middle">75</text><rect x="919.85" y="209" width="1.5" height="5" fill="#a6a6a6"/><text x="920.60" y="226.90" font-size="12" fill="#dcdcdc" text-anchor="middle">80</text><rect x="955.20" y="209" width="1.5" height="5" fill="#a6a6a6"/><text x="955.95" y="226.90" font-size="12" fill="#dcdcdc" text-anchor="middle">85</text><rect x="990.55" y="209" width="1.5" height="5" fill="#a6a6a6"/><text x="991.30" y="226.90" font-size="12" fill="#dcdcdc" text-anchor="middle">90</text><rect x="1025.90" y="209" width="1.5" height="5" fill="#a6a6a6"/><text x="1026.65" y="226.90" font-size="12" fill="#dcdcdc" text-anchor="middle">95</text><rect x="1061.25" y="209" width="1.5" height="5" fill="#a6a6a6"/><text x="1062.00" y="226.90" font-size="12" fill="#dcdcdc" text-anchor="middle">100</text></svg>
<svg class="a" style="left:0;top:330px" width="1460" height="230"><text x="658" y="17" font-size="16" fill="#f4f4f4" text-anchor="middle" textLength="220" lengthAdjust="spacingAndGlyphs">RGB Balance, with Luminance</text><rect x="355" y="26" width="707" height="177" fill="#232323"/><rect x="355" y="157.70" width="707" height="1.6" fill="#1c1c1c"/><rect x="355" y="158" width="707" height="1" fill="#8e8e8e"/><rect x="355" y="113.70" width="707" height="1.6" fill="#1c1c1c"/><rect x="355" y="114" width="707" height="1" fill="#8e8e8e"/><rect x="355" y="69.70" width="707" height="1.6" fill="#1c1c1c"/><rect x="355" y="70" width="707" height="1" fill="#8e8e8e"/><path d="M355.00 114.50 L390.35 114.50 L425.70 114.50 L461.05 113.62 L496.40 110.34 L531.75 103.88 L567.10 98.13 L602.45 92.38 L637.80 87.07 L673.15 89.28 L708.50 86.62 L743.85 86.18 L779.20 83.97 L814.55 87.51 L849.90 89.72 L885.25 91.49 L920.60 93.70 L955.95 104.32 L991.30 115.83 L1026.65 156.98 L1062.00 153.88" fill="none" stroke="#e01a1a" stroke-width="3" stroke-linejoin="round" stroke-linecap="round"/><path d="M355.00 114.50 L390.35 114.50 L425.70 114.06 L461.05 111.85 L496.40 107.86 L531.75 99.45 L567.10 91.93 L602.45 83.08 L637.80 75.12 L673.15 75.12 L708.50 72.02 L743.85 70.69 L779.20 65.38 L814.55 66.71 L849.90 64.94 L885.25 61.40 L920.60 59.19 L955.95 60.96 L991.30 61.84 L1026.65 100.78 L1062.00 98.13" fill="none" stroke="#16901a" stroke-width="3" stroke-linejoin="round" stroke-linecap="round"/><path d="M355.00 114.50 L390.35 114.50 L425.70 114.06 L461.05 111.85 L496.40 107.86 L531.75 99.90 L567.10 92.38 L602.45 83.97 L637.80 75.56 L673.15 77.77 L708.50 76.45 L743.85 79.54 L779.20 78.66 L814.55 81.75 L849.90 81.31 L885.25 80.87 L920.60 78.22 L955.95 83.97 L991.30 91.49 L1026.65 131.76 L1062.00 132.20" fill="none" stroke="#1414e8" stroke-width="3.4" stroke-linejoin="round" stroke-linecap="round"/><rect x="354" y="25" width="709" height="2" fill="#a6a6a6"/><rect x="354" y="25" width="2" height="179" fill="#a6a6a6"/><rect x="1061" y="25" width="2" height="179" fill="#a6a6a6"/><rect x="354" y="202" width="709" height="2" fill="#a6a6a6"/><rect x="350" y="202.50" width="5" height="1" fill="#a6a6a6"/><text x="350.5" y="208.70" font-size="12" fill="#dcdcdc" text-anchor="end">90</text><rect x="350" y="158.25" width="5" height="1" fill="#a6a6a6"/><text x="350.5" y="164.45" font-size="12" fill="#dcdcdc" text-anchor="end">95</text><rect x="350" y="114.00" width="5" height="1" fill="#a6a6a6"/><text x="350.5" y="120.20" font-size="12" fill="#dcdcdc" text-anchor="end">100</text><rect x="350" y="69.75" width="5" height="1" fill="#a6a6a6"/><text x="350.5" y="75.95" font-size="12" fill="#dcdcdc" text-anchor="end">105</text><rect x="350" y="25.50" width="5" height="1" fill="#a6a6a6"/><text x="350.5" y="31.70" font-size="12" fill="#dcdcdc" text-anchor="end">110</text><rect x="354.25" y="203" width="1.5" height="5" fill="#a6a6a6"/><text x="355.00" y="220.40" font-size="12" fill="#dcdcdc" text-anchor="middle">0</text><rect x="389.60" y="203" width="1.5" height="5" fill="#a6a6a6"/><text x="390.35" y="220.40" font-size="12" fill="#dcdcdc" text-anchor="middle">5</text><rect x="424.95" y="203" width="1.5" height="5" fill="#a6a6a6"/><text x="425.70" y="220.40" font-size="12" fill="#dcdcdc" text-anchor="middle">10</text><rect x="460.30" y="203" width="1.5" height="5" fill="#a6a6a6"/><text x="461.05" y="220.40" font-size="12" fill="#dcdcdc" text-anchor="middle">15</text><rect x="495.65" y="203" width="1.5" height="5" fill="#a6a6a6"/><text x="496.40" y="220.40" font-size="12" fill="#dcdcdc" text-anchor="middle">20</text><rect x="531.00" y="203" width="1.5" height="5" fill="#a6a6a6"/><text x="531.75" y="220.40" font-size="12" fill="#dcdcdc" text-anchor="middle">25</text><rect x="566.35" y="203" width="1.5" height="5" fill="#a6a6a6"/><text x="567.10" y="220.40" font-size="12" fill="#dcdcdc" text-anchor="middle">30</text><rect x="601.70" y="203" width="1.5" height="5" fill="#a6a6a6"/><text x="602.45" y="220.40" font-size="12" fill="#dcdcdc" text-anchor="middle">35</text><rect x="637.05" y="203" width="1.5" height="5" fill="#a6a6a6"/><text x="637.80" y="220.40" font-size="12" fill="#dcdcdc" text-anchor="middle">40</text><rect x="672.40" y="203" width="1.5" height="5" fill="#a6a6a6"/><text x="673.15" y="220.40" font-size="12" fill="#dcdcdc" text-anchor="middle">45</text><rect x="707.75" y="203" width="1.5" height="5" fill="#a6a6a6"/><text x="708.50" y="220.40" font-size="12" fill="#dcdcdc" text-anchor="middle">50</text><rect x="743.10" y="203" width="1.5" height="5" fill="#a6a6a6"/><text x="743.85" y="220.40" font-size="12" fill="#dcdcdc" text-anchor="middle">55</text><rect x="778.45" y="203" width="1.5" height="5" fill="#a6a6a6"/><text x="779.20" y="220.40" font-size="12" fill="#dcdcdc" text-anchor="middle">60</text><rect x="813.80" y="203" width="1.5" height="5" fill="#a6a6a6"/><text x="814.55" y="220.40" font-size="12" fill="#dcdcdc" text-anchor="middle">65</text><rect x="849.15" y="203" width="1.5" height="5" fill="#a6a6a6"/><text x="849.90" y="220.40" font-size="12" fill="#dcdcdc" text-anchor="middle">70</text><rect x="884.50" y="203" width="1.5" height="5" fill="#a6a6a6"/><text x="885.25" y="220.40" font-size="12" fill="#dcdcdc" text-anchor="middle">75</text><rect x="919.85" y="203" width="1.5" height="5" fill="#a6a6a6"/><text x="920.60" y="220.40" font-size="12" fill="#dcdcdc" text-anchor="middle">80</text><rect x="955.20" y="203" width="1.5" height="5" fill="#a6a6a6"/><text x="955.95" y="220.40" font-size="12" fill="#dcdcdc" text-anchor="middle">85</text><rect x="990.55" y="203" width="1.5" height="5" fill="#a6a6a6"/><text x="991.30" y="220.40" font-size="12" fill="#dcdcdc" text-anchor="middle">90</text><rect x="1025.90" y="203" width="1.5" height="5" fill="#a6a6a6"/><text x="1026.65" y="220.40" font-size="12" fill="#dcdcdc" text-anchor="middle">95</text><rect x="1061.25" y="203" width="1.5" height="5" fill="#a6a6a6"/><text x="1062.00" y="220.40" font-size="12" fill="#dcdcdc" text-anchor="middle">100</text></svg>
<svg class="a" style="left:0;top:82px" width="1460" height="330"><text x="1241" y="12.5" font-size="12" fill="#dcdcdc" text-anchor="middle">EOTF</text><rect x="1105" y="18" width="293" height="282.5" fill="#232323"/><rect x="1105" y="271.70" width="293" height="1.6" fill="#1c1c1c"/><rect x="1105" y="272" width="293" height="1" fill="#8e8e8e"/><rect x="1105" y="243.70" width="293" height="1.6" fill="#1c1c1c"/><rect x="1105" y="244" width="293" height="1" fill="#8e8e8e"/><rect x="1105" y="214.70" width="293" height="1.6" fill="#1c1c1c"/><rect x="1105" y="215" width="293" height="1" fill="#8e8e8e"/><rect x="1105" y="186.70" width="293" height="1.6" fill="#1c1c1c"/><rect x="1105" y="187" width="293" height="1" fill="#8e8e8e"/><rect x="1105" y="158.70" width="293" height="1.6" fill="#1c1c1c"/><rect x="1105" y="159" width="293" height="1" fill="#8e8e8e"/><rect x="1105" y="129.70" width="293" height="1.6" fill="#1c1c1c"/><rect x="1105" y="130" width="293" height="1" fill="#8e8e8e"/><rect x="1105" y="101.70" width="293" height="1.6" fill="#1c1c1c"/><rect x="1105" y="102" width="293" height="1" fill="#8e8e8e"/><rect x="1105" y="73.70" width="293" height="1.6" fill="#1c1c1c"/><rect x="1105" y="74" width="293" height="1" fill="#8e8e8e"/><rect x="1105" y="45.70" width="293" height="1.6" fill="#1c1c1c"/><rect x="1105" y="46" width="293" height="1" fill="#8e8e8e"/><path d="M1105.00 300.50 L1371.63 42.86 L1377.49 39.19 L1398.00 39.19" fill="none" stroke="#f2f02a" stroke-width="2.2" stroke-linejoin="round" stroke-linecap="round"/><path d="M1105.00 300.50 L1178.25 207.84 L1207.55 183.26 L1236.85 159.25 L1266.15 133.83 L1280.80 119.70 L1310.10 92.86 L1339.40 66.03 L1368.70 42.01 L1377.49 39.19 L1398.00 39.19" fill="none" stroke="#858585" stroke-width="2.4" stroke-linejoin="round" stroke-linecap="round"/><rect x="1104" y="17" width="295" height="2" fill="#a6a6a6"/><rect x="1104" y="17" width="2" height="284.5" fill="#a6a6a6"/><rect x="1397" y="17" width="2" height="284.5" fill="#a6a6a6"/><rect x="1104" y="299.5" width="295" height="2" fill="#a6a6a6"/><rect x="1100" y="300.00" width="5" height="1" fill="#a6a6a6"/><text x="1100.5" y="306.20" font-size="12" fill="#dcdcdc" text-anchor="end">0</text><rect x="1100" y="271.75" width="5" height="1" fill="#a6a6a6"/><text x="1100.5" y="277.95" font-size="12" fill="#dcdcdc" text-anchor="end">0,1</text><rect x="1100" y="243.50" width="5" height="1" fill="#a6a6a6"/><text x="1100.5" y="249.70" font-size="12" fill="#dcdcdc" text-anchor="end">0,2</text><rect x="1100" y="215.25" width="5" height="1" fill="#a6a6a6"/><text x="1100.5" y="221.45" font-size="12" fill="#dcdcdc" text-anchor="end">0,3</text><rect x="1100" y="187.00" width="5" height="1" fill="#a6a6a6"/><text x="1100.5" y="193.20" font-size="12" fill="#dcdcdc" text-anchor="end">0,4</text><rect x="1100" y="158.75" width="5" height="1" fill="#a6a6a6"/><text x="1100.5" y="164.95" font-size="12" fill="#dcdcdc" text-anchor="end">0,5</text><rect x="1100" y="130.50" width="5" height="1" fill="#a6a6a6"/><text x="1100.5" y="136.70" font-size="12" fill="#dcdcdc" text-anchor="end">0,6</text><rect x="1100" y="102.25" width="5" height="1" fill="#a6a6a6"/><text x="1100.5" y="108.45" font-size="12" fill="#dcdcdc" text-anchor="end">0,7</text><rect x="1100" y="74.00" width="5" height="1" fill="#a6a6a6"/><text x="1100.5" y="80.20" font-size="12" fill="#dcdcdc" text-anchor="end">0,8</text><rect x="1100" y="45.75" width="5" height="1" fill="#a6a6a6"/><text x="1100.5" y="51.95" font-size="12" fill="#dcdcdc" text-anchor="end">0,9</text><rect x="1100" y="17.50" width="5" height="1" fill="#a6a6a6"/><text x="1100.5" y="23.70" font-size="12" fill="#dcdcdc" text-anchor="end">1</text><rect x="1104.25" y="300.5" width="1.5" height="5" fill="#a6a6a6"/><text x="1105.00" y="317.90" font-size="12" fill="#dcdcdc" text-anchor="middle">0</text><rect x="1162.85" y="300.5" width="1.5" height="5" fill="#a6a6a6"/><text x="1163.60" y="317.90" font-size="12" fill="#dcdcdc" text-anchor="middle">20</text><rect x="1221.45" y="300.5" width="1.5" height="5" fill="#a6a6a6"/><text x="1222.20" y="317.90" font-size="12" fill="#dcdcdc" text-anchor="middle">40</text><rect x="1280.05" y="300.5" width="1.5" height="5" fill="#a6a6a6"/><text x="1280.80" y="317.90" font-size="12" fill="#dcdcdc" text-anchor="middle">60</text><rect x="1338.65" y="300.5" width="1.5" height="5" fill="#a6a6a6"/><text x="1339.40" y="317.90" font-size="12" fill="#dcdcdc" text-anchor="middle">80</text><rect x="1397.25" y="300.5" width="1.5" height="5" fill="#a6a6a6"/><text x="1398.00" y="317.90" font-size="12" fill="#dcdcdc" text-anchor="middle">100</text></svg>
<svg class="a" style="left:0;top:412px" width="1460" height="330"><text x="1241" y="12.5" font-size="12" fill="#dcdcdc" text-anchor="middle">Luminance</text><rect x="1115" y="17.5" width="283" height="282.5" fill="#232323"/><rect x="1115" y="270.70" width="283" height="1.6" fill="#1c1c1c"/><rect x="1115" y="271" width="283" height="1" fill="#8e8e8e"/><rect x="1115" y="242.70" width="283" height="1.6" fill="#1c1c1c"/><rect x="1115" y="243" width="283" height="1" fill="#8e8e8e"/><rect x="1115" y="214.70" width="283" height="1.6" fill="#1c1c1c"/><rect x="1115" y="215" width="283" height="1" fill="#8e8e8e"/><rect x="1115" y="185.70" width="283" height="1.6" fill="#1c1c1c"/><rect x="1115" y="186" width="283" height="1" fill="#8e8e8e"/><rect x="1115" y="157.70" width="283" height="1.6" fill="#1c1c1c"/><rect x="1115" y="158" width="283" height="1" fill="#8e8e8e"/><rect x="1115" y="129.70" width="283" height="1.6" fill="#1c1c1c"/><rect x="1115" y="130" width="283" height="1" fill="#8e8e8e"/><rect x="1115" y="101.70" width="283" height="1.6" fill="#1c1c1c"/><rect x="1115" y="102" width="283" height="1" fill="#8e8e8e"/><rect x="1115" y="73.70" width="283" height="1.6" fill="#1c1c1c"/><rect x="1115" y="74" width="283" height="1" fill="#8e8e8e"/><rect x="1115" y="44.70" width="283" height="1.6" fill="#1c1c1c"/><rect x="1115" y="45" width="283" height="1" fill="#8e8e8e"/><path d="M1115.00 300.00 L1171.60 299.72 L1199.90 299.15 L1228.20 297.17 L1242.35 294.91 L1256.50 292.09 L1270.65 288.70 L1284.80 281.36 L1298.95 270.62 L1313.10 255.37 L1327.25 231.63 L1341.40 193.78 L1355.55 137.28 L1369.13 52.53 L1383.85 33.32 L1398.00 31.62" fill="none" stroke="#858585" stroke-width="2.4" stroke-linejoin="round" stroke-linecap="round"/><path d="M1115.00 300.00 L1171.60 299.89 L1199.90 299.55 L1228.20 298.02 L1242.35 296.61 L1256.50 294.35 L1270.65 291.52 L1284.80 286.44 L1298.95 277.97 L1313.10 264.97 L1327.25 245.76 L1335.74 226.55 L1344.23 202.82 L1352.72 170.05 L1358.38 138.98 L1364.04 105.08 L1369.70 71.18 L1373.94 40.10 L1378.19 31.06 L1398.00 31.06" fill="none" stroke="#f2f02a" stroke-width="2.4" stroke-linejoin="round" stroke-linecap="round"/><rect x="1114" y="16.5" width="285" height="2" fill="#a6a6a6"/><rect x="1114" y="16.5" width="2" height="284.5" fill="#a6a6a6"/><rect x="1397" y="16.5" width="2" height="284.5" fill="#a6a6a6"/><rect x="1114" y="299" width="285" height="2" fill="#a6a6a6"/><rect x="1110" y="299.50" width="5" height="1" fill="#a6a6a6"/><text x="1110.5" y="305.70" font-size="12" fill="#dcdcdc" text-anchor="end">0</text><rect x="1110" y="271.25" width="5" height="1" fill="#a6a6a6"/><text x="1110.5" y="277.45" font-size="12" fill="#dcdcdc" text-anchor="end">500</text><rect x="1110" y="243.00" width="5" height="1" fill="#a6a6a6"/><text x="1110.5" y="249.20" font-size="12" fill="#dcdcdc" text-anchor="end">1000</text><rect x="1110" y="214.75" width="5" height="1" fill="#a6a6a6"/><text x="1110.5" y="220.95" font-size="12" fill="#dcdcdc" text-anchor="end">1500</text><rect x="1110" y="186.50" width="5" height="1" fill="#a6a6a6"/><text x="1110.5" y="192.70" font-size="12" fill="#dcdcdc" text-anchor="end">2000</text><rect x="1110" y="158.25" width="5" height="1" fill="#a6a6a6"/><text x="1110.5" y="164.45" font-size="12" fill="#dcdcdc" text-anchor="end">2500</text><rect x="1110" y="130.00" width="5" height="1" fill="#a6a6a6"/><text x="1110.5" y="136.20" font-size="12" fill="#dcdcdc" text-anchor="end">3000</text><rect x="1110" y="101.75" width="5" height="1" fill="#a6a6a6"/><text x="1110.5" y="107.95" font-size="12" fill="#dcdcdc" text-anchor="end">3500</text><rect x="1110" y="73.50" width="5" height="1" fill="#a6a6a6"/><text x="1110.5" y="79.70" font-size="12" fill="#dcdcdc" text-anchor="end">4000</text><rect x="1110" y="45.25" width="5" height="1" fill="#a6a6a6"/><text x="1110.5" y="51.45" font-size="12" fill="#dcdcdc" text-anchor="end">4500</text><rect x="1110" y="17.00" width="5" height="1" fill="#a6a6a6"/><text x="1110.5" y="23.20" font-size="12" fill="#dcdcdc" text-anchor="end">5000</text><rect x="1114.25" y="300" width="1.5" height="5" fill="#a6a6a6"/><text x="1115.00" y="317.90" font-size="12" fill="#dcdcdc" text-anchor="middle">0</text><rect x="1170.85" y="300" width="1.5" height="5" fill="#a6a6a6"/><text x="1171.60" y="317.90" font-size="12" fill="#dcdcdc" text-anchor="middle">20</text><rect x="1227.45" y="300" width="1.5" height="5" fill="#a6a6a6"/><text x="1228.20" y="317.90" font-size="12" fill="#dcdcdc" text-anchor="middle">40</text><rect x="1284.05" y="300" width="1.5" height="5" fill="#a6a6a6"/><text x="1284.80" y="317.90" font-size="12" fill="#dcdcdc" text-anchor="middle">60</text><rect x="1340.65" y="300" width="1.5" height="5" fill="#a6a6a6"/><text x="1341.40" y="317.90" font-size="12" fill="#dcdcdc" text-anchor="middle">80</text><rect x="1397.25" y="300" width="1.5" height="5" fill="#a6a6a6"/><text x="1398.00" y="317.90" font-size="12" fill="#dcdcdc" text-anchor="middle">100</text></svg>
<svg class="a" style="left:0;top:560px" width="245" height="170">
<text x="57" y="28" font-size="16.5" fill="#f0f0f0" textLength="125" lengthAdjust="spacingAndGlyphs">Current Reading:</text>
<text x="57" y="60.0" font-size="21" fill="#f4f4f4" textLength="84" lengthAdjust="spacingAndGlyphs">x: 0,3013</text>
<text x="57" y="93.3" font-size="21" fill="#f4f4f4" textLength="85" lengthAdjust="spacingAndGlyphs">y: 0,3435</text>
<text x="57" y="126.6" font-size="21" fill="#f4f4f4" textLength="115" lengthAdjust="spacingAndGlyphs">fL: 1381,786</text>
<text x="57" y="159.9" font-size="21" fill="#f4f4f4" textLength="155" lengthAdjust="spacingAndGlyphs">cd/m²: 4734,356</text>
</svg>
<div class="a" style="left:247px;top:559px;width:574px;height:165px;background:#111;overflow:hidden">
<svg class="a" style="left:0;top:0" width="576" height="165"><defs><clipPath id="tc"><rect x="1" y="1" width="572" height="163"/></clipPath></defs><g clip-path="url(#tc)"><rect x="1" y="1" width="574" height="12.5" fill="#2f2f2f"/><rect x="1" y="13" width="574" height="11" fill="#151515"/><text x="129.8" y="18" font-size="12" fill="#f4f4f4" stroke="#f4f4f4" stroke-width="0.35" text-anchor="middle">0</text><text x="168.2" y="18" font-size="12" fill="#f4f4f4" stroke="#f4f4f4" stroke-width="0.35" text-anchor="middle">5</text><text x="206.8" y="18" font-size="12" fill="#f4f4f4" stroke="#f4f4f4" stroke-width="0.35" text-anchor="middle">10</text><text x="245.2" y="18" font-size="12" fill="#f4f4f4" stroke="#f4f4f4" stroke-width="0.35" text-anchor="middle">15</text><text x="283.8" y="18" font-size="12" fill="#f4f4f4" stroke="#f4f4f4" stroke-width="0.35" text-anchor="middle">20</text><text x="326.0" y="18" font-size="12" fill="#f4f4f4" stroke="#f4f4f4" stroke-width="0.35" text-anchor="middle">25</text><text x="372.0" y="18" font-size="12" fill="#f4f4f4" stroke="#f4f4f4" stroke-width="0.35" text-anchor="middle">30</text><text x="418.0" y="18" font-size="12" fill="#f4f4f4" stroke="#f4f4f4" stroke-width="0.35" text-anchor="middle">35</text><text x="463.5" y="18" font-size="12" fill="#f4f4f4" stroke="#f4f4f4" stroke-width="0.35" text-anchor="middle">40</text><text x="509.0" y="18" font-size="12" fill="#f4f4f4" stroke="#f4f4f4" stroke-width="0.35" text-anchor="middle">45</text><text x="558.5" y="18" font-size="12" fill="#f4f4f4" stroke="#f4f4f4" stroke-width="0.35" text-anchor="middle">50</text><rect x="1" y="24.0" width="574" height="21.4" fill="#3c3c3c"/><text x="11" y="39.3" font-size="13" font-weight="bold" fill="#f6f6f6">Y</text><text x="114.5" y="39.3" font-size="13" fill="#ececec" textLength="31.8" lengthAdjust="spacingAndGlyphs">0,000</text><text x="153.0" y="39.3" font-size="13" fill="#ececec" textLength="31.8" lengthAdjust="spacingAndGlyphs">0,132</text><text x="191.5" y="39.3" font-size="13" fill="#ececec" textLength="31.8" lengthAdjust="spacingAndGlyphs">0,703</text><text x="230.0" y="39.3" font-size="13" fill="#ececec" textLength="31.8" lengthAdjust="spacingAndGlyphs">2,397</text><text x="268.5" y="39.3" font-size="13" fill="#ececec" textLength="31.8" lengthAdjust="spacingAndGlyphs">5,712</text><text x="307.0" y="39.3" font-size="13" fill="#ececec" textLength="38.3" lengthAdjust="spacingAndGlyphs">12,818</text><text x="353.0" y="39.3" font-size="13" fill="#ececec" textLength="38.3" lengthAdjust="spacingAndGlyphs">22,179</text><text x="399.0" y="39.3" font-size="13" fill="#ececec" textLength="38.3" lengthAdjust="spacingAndGlyphs">35,744</text><text x="445.0" y="39.3" font-size="13" fill="#ececec" textLength="38.3" lengthAdjust="spacingAndGlyphs">55,817</text><text x="490.0" y="39.3" font-size="13" fill="#ececec" textLength="38.3" lengthAdjust="spacingAndGlyphs">86,330</text><text x="536.0" y="39.3" font-size="13" fill="#ececec" textLength="44.9" lengthAdjust="spacingAndGlyphs">138,690</text><rect x="1" y="45.2" width="574" height="21.4" fill="#7e7e7e"/><text x="11" y="60.5" font-size="13" font-weight="bold" fill="#f6f6f6">x: CIE31</text><text x="114.5" y="60.5" font-size="13" fill="#ececec" textLength="31.8" lengthAdjust="spacingAndGlyphs">0,333</text><text x="153.0" y="60.5" font-size="13" fill="#ececec" textLength="31.8" lengthAdjust="spacingAndGlyphs">0,325</text><text x="191.5" y="60.5" font-size="13" fill="#ececec" textLength="31.8" lengthAdjust="spacingAndGlyphs">0,303</text><text x="230.0" y="60.5" font-size="13" fill="#ececec" textLength="31.8" lengthAdjust="spacingAndGlyphs">0,293</text><text x="268.5" y="60.5" font-size="13" fill="#ececec" textLength="31.8" lengthAdjust="spacingAndGlyphs">0,296</text><text x="307.0" y="60.5" font-size="13" fill="#ececec" textLength="31.8" lengthAdjust="spacingAndGlyphs">0,293</text><text x="353.0" y="60.5" font-size="13" fill="#ececec" textLength="31.8" lengthAdjust="spacingAndGlyphs">0,295</text><text x="399.0" y="60.5" font-size="13" fill="#ececec" textLength="31.8" lengthAdjust="spacingAndGlyphs">0,295</text><text x="445.0" y="60.5" font-size="13" fill="#ececec" textLength="31.8" lengthAdjust="spacingAndGlyphs">0,296</text><text x="490.0" y="60.5" font-size="13" fill="#ececec" textLength="31.8" lengthAdjust="spacingAndGlyphs">0,297</text><text x="536.0" y="60.5" font-size="13" fill="#ececec" textLength="31.8" lengthAdjust="spacingAndGlyphs">0,300</text><rect x="1" y="66.4" width="574" height="21.4" fill="#3c3c3c"/><text x="11" y="81.7" font-size="13" font-weight="bold" fill="#f6f6f6">y: CIE31</text><text x="114.5" y="81.7" font-size="13" fill="#ececec" textLength="31.8" lengthAdjust="spacingAndGlyphs">0,333</text><text x="153.0" y="81.7" font-size="13" fill="#ececec" textLength="31.8" lengthAdjust="spacingAndGlyphs">0,326</text><text x="191.5" y="81.7" font-size="13" fill="#ececec" textLength="31.8" lengthAdjust="spacingAndGlyphs">0,341</text><text x="230.0" y="81.7" font-size="13" fill="#ececec" textLength="31.8" lengthAdjust="spacingAndGlyphs">0,330</text><text x="268.5" y="81.7" font-size="13" fill="#ececec" textLength="31.8" lengthAdjust="spacingAndGlyphs">0,330</text><text x="307.0" y="81.7" font-size="13" fill="#ececec" textLength="31.8" lengthAdjust="spacingAndGlyphs">0,329</text><text x="353.0" y="81.7" font-size="13" fill="#ececec" textLength="31.8" lengthAdjust="spacingAndGlyphs">0,331</text><text x="399.0" y="81.7" font-size="13" fill="#ececec" textLength="31.8" lengthAdjust="spacingAndGlyphs">0,332</text><text x="445.0" y="81.7" font-size="13" fill="#ececec" textLength="31.8" lengthAdjust="spacingAndGlyphs">0,333</text><text x="490.0" y="81.7" font-size="13" fill="#ececec" textLength="31.8" lengthAdjust="spacingAndGlyphs">0,334</text><text x="536.0" y="81.7" font-size="13" fill="#ececec" textLength="31.8" lengthAdjust="spacingAndGlyphs">0,336</text><rect x="1" y="87.6" width="574" height="21.4" fill="#7e7e7e"/><text x="11" y="102.9" font-size="13" font-weight="bold" fill="#f6f6f6">Target Y</text><text x="114.5" y="102.9" font-size="13" fill="#ececec" textLength="31.8" lengthAdjust="spacingAndGlyphs">0,000</text><text x="153.0" y="102.9" font-size="13" fill="#ececec" textLength="31.8" lengthAdjust="spacingAndGlyphs">0,061</text><text x="191.5" y="102.9" font-size="13" fill="#ececec" textLength="31.8" lengthAdjust="spacingAndGlyphs">0,328</text><text x="230.0" y="102.9" font-size="13" fill="#ececec" textLength="31.8" lengthAdjust="spacingAndGlyphs">1,015</text><text x="268.5" y="102.9" font-size="13" fill="#ececec" textLength="31.8" lengthAdjust="spacingAndGlyphs">2,465</text><text x="307.0" y="102.9" font-size="13" fill="#ececec" textLength="31.8" lengthAdjust="spacingAndGlyphs">5,238</text><text x="353.0" y="102.9" font-size="13" fill="#ececec" textLength="38.3" lengthAdjust="spacingAndGlyphs">10,214</text><text x="399.0" y="102.9" font-size="13" fill="#ececec" textLength="38.3" lengthAdjust="spacingAndGlyphs">18,781</text><text x="445.0" y="102.9" font-size="13" fill="#ececec" textLength="38.3" lengthAdjust="spacingAndGlyphs">33,104</text><text x="490.0" y="102.9" font-size="13" fill="#ececec" textLength="38.3" lengthAdjust="spacingAndGlyphs">56,554</text><text x="536.0" y="102.9" font-size="13" fill="#ececec" textLength="38.3" lengthAdjust="spacingAndGlyphs">94,378</text><rect x="1" y="108.8" width="574" height="21.4" fill="#3c3c3c"/><text x="11" y="124.1" font-size="13" font-weight="bold" fill="#f6f6f6">Target x:CIE31</text><text x="114.5" y="124.1" font-size="13" fill="#ececec" textLength="31.8" lengthAdjust="spacingAndGlyphs">0,313</text><text x="153.0" y="124.1" font-size="13" fill="#ececec" textLength="31.8" lengthAdjust="spacingAndGlyphs">0,313</text><text x="191.5" y="124.1" font-size="13" fill="#ececec" textLength="31.8" lengthAdjust="spacingAndGlyphs">0,313</text><text x="230.0" y="124.1" font-size="13" fill="#ececec" textLength="31.8" lengthAdjust="spacingAndGlyphs">0,313</text><text x="268.5" y="124.1" font-size="13" fill="#ececec" textLength="31.8" lengthAdjust="spacingAndGlyphs">0,313</text><text x="307.0" y="124.1" font-size="13" fill="#ececec" textLength="31.8" lengthAdjust="spacingAndGlyphs">0,313</text><text x="353.0" y="124.1" font-size="13" fill="#ececec" textLength="31.8" lengthAdjust="spacingAndGlyphs">0,313</text><text x="399.0" y="124.1" font-size="13" fill="#ececec" textLength="31.8" lengthAdjust="spacingAndGlyphs">0,313</text><text x="445.0" y="124.1" font-size="13" fill="#ececec" textLength="31.8" lengthAdjust="spacingAndGlyphs">0,313</text><text x="490.0" y="124.1" font-size="13" fill="#ececec" textLength="31.8" lengthAdjust="spacingAndGlyphs">0,313</text><text x="536.0" y="124.1" font-size="13" fill="#ececec" textLength="31.8" lengthAdjust="spacingAndGlyphs">0,313</text><rect x="1" y="130.0" width="574" height="21.4" fill="#7e7e7e"/><text x="11" y="145.3" font-size="13" font-weight="bold" fill="#f6f6f6">Target y:CIE31</text><text x="114.5" y="145.3" font-size="13" fill="#ececec" textLength="31.8" lengthAdjust="spacingAndGlyphs">0,329</text><text x="153.0" y="145.3" font-size="13" fill="#ececec" textLength="31.8" lengthAdjust="spacingAndGlyphs">0,329</text><text x="191.5" y="145.3" font-size="13" fill="#ececec" textLength="31.8" lengthAdjust="spacingAndGlyphs">0,329</text><text x="230.0" y="145.3" font-size="13" fill="#ececec" textLength="31.8" lengthAdjust="spacingAndGlyphs">0,329</text><text x="268.5" y="145.3" font-size="13" fill="#ececec" textLength="31.8" lengthAdjust="spacingAndGlyphs">0,329</text><text x="307.0" y="145.3" font-size="13" fill="#ececec" textLength="31.8" lengthAdjust="spacingAndGlyphs">0,329</text><text x="353.0" y="145.3" font-size="13" fill="#ececec" textLength="31.8" lengthAdjust="spacingAndGlyphs">0,329</text><text x="399.0" y="145.3" font-size="13" fill="#ececec" textLength="31.8" lengthAdjust="spacingAndGlyphs">0,329</text><text x="445.0" y="145.3" font-size="13" fill="#ececec" textLength="31.8" lengthAdjust="spacingAndGlyphs">0,329</text><text x="490.0" y="145.3" font-size="13" fill="#ececec" textLength="31.8" lengthAdjust="spacingAndGlyphs">0,329</text><text x="536.0" y="145.3" font-size="13" fill="#ececec" textLength="31.8" lengthAdjust="spacingAndGlyphs">0,329</text><rect x="1" y="151.2" width="574" height="13.8" fill="#5a5a5a"/><rect x="2" y="152.2" width="12" height="11" rx="2" fill="#767676"/><path d="M5 157.7 L10 153.7 V161.7Z" fill="#3a3a3a"/><rect x="16" y="152.2" width="268" height="11" rx="5" fill="#454545"/><rect x="560" y="152.2" width="12" height="11" rx="2" fill="#767676"/><path d="M569 157.7 L564 153.7 V161.7Z" fill="#3a3a3a"/></g></svg>
</div>
<svg class="a" style="left:820px;top:555px" width="260" height="180"><rect x="37.5" y="14" width="204.5" height="147.5" fill="#232323"/><rect x="37.5" y="146" width="204.5" height="1" fill="#8e8e8e"/><rect x="32.5" y="146.25" width="5" height="1" fill="#a6a6a6"/><text x="32.5" y="151.15" font-size="12" fill="#dcdcdc" text-anchor="end">96</text><rect x="37.5" y="117" width="204.5" height="1" fill="#8e8e8e"/><rect x="32.5" y="116.75" width="5" height="1" fill="#a6a6a6"/><text x="32.5" y="121.65" font-size="12" fill="#dcdcdc" text-anchor="end">98</text><rect x="37.5" y="87" width="204.5" height="1" fill="#8e8e8e"/><rect x="32.5" y="87.25" width="5" height="1" fill="#a6a6a6"/><text x="32.5" y="92.15" font-size="12" fill="#dcdcdc" text-anchor="end">100</text><rect x="37.5" y="58" width="204.5" height="1" fill="#8e8e8e"/><rect x="32.5" y="57.75" width="5" height="1" fill="#a6a6a6"/><text x="32.5" y="62.65" font-size="12" fill="#dcdcdc" text-anchor="end">102</text><rect x="37.5" y="28" width="204.5" height="1" fill="#8e8e8e"/><rect x="32.5" y="28.25" width="5" height="1" fill="#a6a6a6"/><text x="32.5" y="33.15" font-size="12" fill="#dcdcdc" text-anchor="end">104</text><defs><linearGradient id="gg" x1="0" y1="0" x2="0" y2="1"><stop offset="0" stop-color="#5aaa5a"/><stop offset="1" stop-color="#3a9a3a"/></linearGradient></defs><rect x="57.5" y="154.5" width="53.5" height="7.0" fill="#e85454"/><rect x="111.5" y="61" width="54.5" height="100.5" fill="#0c0c0c"/><rect x="112.5" y="62" width="52.5" height="99.5" fill="url(#gg)"/><rect x="167.5" y="118.5" width="52.5" height="43.0" fill="#5252f8"/><path d="M37.5 161.5 V14 H242 V161.5" fill="none" stroke="#a6a6a6" stroke-width="2"/><rect x="36.5" y="160.5" width="206.5" height="2" fill="#a6a6a6"/><rect x="36.75" y="161.5" width="1.5" height="6" fill="#a6a6a6"/><rect x="241.25" y="161.5" width="1.5" height="6" fill="#a6a6a6"/><text x="140" y="175" font-size="12" fill="#dcdcdc" text-anchor="middle">100</text></svg>
<div class="a" style="left:1.0px;top:738px;width:56px;height:46px;border-radius:4px;background:linear-gradient(#a4a4a4,#8c8c8c 30%,#7a7a7a 65%,#666);border:1px solid #505050"></div>
<div class="a" style="left:4.6px;top:741.5px;width:48.6px;height:27.5px;border-radius:3px;background:rgb(0,0,0);box-shadow:0 0 0 1px rgba(60,60,60,.6)"></div>
<svg class="a" style="left:1.0px;top:770px" width="56" height="15"><text x="28" y="10.8" font-size="10.5" fill="#262626" stroke="#262626" stroke-width="0.25" text-anchor="middle">0</text></svg>
<div class="a" style="left:58.7px;top:738px;width:56px;height:46px;border-radius:4px;background:linear-gradient(#a4a4a4,#8c8c8c 30%,#7a7a7a 65%,#666);border:1px solid #505050"></div>
<div class="a" style="left:62.3px;top:741.5px;width:48.6px;height:27.5px;border-radius:3px;background:rgb(13,13,13);box-shadow:0 0 0 1px rgba(60,60,60,.6)"></div>
<svg class="a" style="left:58.7px;top:770px" width="56" height="15"><text x="28" y="10.8" font-size="10.5" fill="#262626" stroke="#262626" stroke-width="0.25" text-anchor="middle">5</text></svg>
<div class="a" style="left:116.4px;top:738px;width:56px;height:46px;border-radius:4px;background:linear-gradient(#a4a4a4,#8c8c8c 30%,#7a7a7a 65%,#666);border:1px solid #505050"></div>
<div class="a" style="left:120.0px;top:741.5px;width:48.6px;height:27.5px;border-radius:3px;background:rgb(26,26,26);box-shadow:0 0 0 1px rgba(60,60,60,.6)"></div>
<svg class="a" style="left:116.4px;top:770px" width="56" height="15"><text x="28" y="10.8" font-size="10.5" fill="#262626" stroke="#262626" stroke-width="0.25" text-anchor="middle">10</text></svg>
<div class="a" style="left:174.2px;top:738px;width:56px;height:46px;border-radius:4px;background:linear-gradient(#a4a4a4,#8c8c8c 30%,#7a7a7a 65%,#666);border:1px solid #505050"></div>
<div class="a" style="left:177.8px;top:741.5px;width:48.6px;height:27.5px;border-radius:3px;background:rgb(38,38,38);box-shadow:0 0 0 1px rgba(60,60,60,.6)"></div>
<svg class="a" style="left:174.2px;top:770px" width="56" height="15"><text x="28" y="10.8" font-size="10.5" fill="#262626" stroke="#262626" stroke-width="0.25" text-anchor="middle">15</text></svg>
<div class="a" style="left:231.9px;top:738px;width:56px;height:46px;border-radius:4px;background:linear-gradient(#a4a4a4,#8c8c8c 30%,#7a7a7a 65%,#666);border:1px solid #505050"></div>
<div class="a" style="left:235.5px;top:741.5px;width:48.6px;height:27.5px;border-radius:3px;background:rgb(51,51,51);box-shadow:0 0 0 1px rgba(60,60,60,.6)"></div>
<svg class="a" style="left:231.9px;top:770px" width="56" height="15"><text x="28" y="10.8" font-size="10.5" fill="#262626" stroke="#262626" stroke-width="0.25" text-anchor="middle">20</text></svg>
<div class="a" style="left:289.6px;top:738px;width:56px;height:46px;border-radius:4px;background:linear-gradient(#a4a4a4,#8c8c8c 30%,#7a7a7a 65%,#666);border:1px solid #505050"></div>
<div class="a" style="left:293.2px;top:741.5px;width:48.6px;height:27.5px;border-radius:3px;background:rgb(64,64,64);box-shadow:0 0 0 1px rgba(60,60,60,.6)"></div>
<svg class="a" style="left:289.6px;top:770px" width="56" height="15"><text x="28" y="10.8" font-size="10.5" fill="#262626" stroke="#262626" stroke-width="0.25" text-anchor="middle">25</text></svg>
<div class="a" style="left:347.3px;top:738px;width:56px;height:46px;border-radius:4px;background:linear-gradient(#a4a4a4,#8c8c8c 30%,#7a7a7a 65%,#666);border:1px solid #505050"></div>
<div class="a" style="left:350.9px;top:741.5px;width:48.6px;height:27.5px;border-radius:3px;background:rgb(76,76,76);box-shadow:0 0 0 1px rgba(60,60,60,.6)"></div>
<svg class="a" style="left:347.3px;top:770px" width="56" height="15"><text x="28" y="10.8" font-size="10.5" fill="#262626" stroke="#262626" stroke-width="0.25" text-anchor="middle">30</text></svg>
<div class="a" style="left:405.0px;top:738px;width:56px;height:46px;border-radius:4px;background:linear-gradient(#a4a4a4,#8c8c8c 30%,#7a7a7a 65%,#666);border:1px solid #505050"></div>
<div class="a" style="left:408.6px;top:741.5px;width:48.6px;height:27.5px;border-radius:3px;background:rgb(89,89,89);box-shadow:0 0 0 1px rgba(60,60,60,.6)"></div>
<svg class="a" style="left:405.0px;top:770px" width="56" height="15"><text x="28" y="10.8" font-size="10.5" fill="#262626" stroke="#262626" stroke-width="0.25" text-anchor="middle">35</text></svg>
<div class="a" style="left:462.8px;top:738px;width:56px;height:46px;border-radius:4px;background:linear-gradient(#a4a4a4,#8c8c8c 30%,#7a7a7a 65%,#666);border:1px solid #505050"></div>
<div class="a" style="left:466.4px;top:741.5px;width:48.6px;height:27.5px;border-radius:3px;background:rgb(102,102,102);box-shadow:0 0 0 1px rgba(60,60,60,.6)"></div>
<svg class="a" style="left:462.8px;top:770px" width="56" height="15"><text x="28" y="10.8" font-size="10.5" fill="#262626" stroke="#262626" stroke-width="0.25" text-anchor="middle">40</text></svg>
<div class="a" style="left:520.5px;top:738px;width:56px;height:46px;border-radius:4px;background:linear-gradient(#a4a4a4,#8c8c8c 30%,#7a7a7a 65%,#666);border:1px solid #505050"></div>
<div class="a" style="left:524.1px;top:741.5px;width:48.6px;height:27.5px;border-radius:3px;background:rgb(115,115,115);box-shadow:0 0 0 1px rgba(60,60,60,.6)"></div>
<svg class="a" style="left:520.5px;top:770px" width="56" height="15"><text x="28" y="10.8" font-size="10.5" fill="#262626" stroke="#262626" stroke-width="0.25" text-anchor="middle">45</text></svg>
<div class="a" style="left:578.2px;top:738px;width:56px;height:46px;border-radius:4px;background:linear-gradient(#a4a4a4,#8c8c8c 30%,#7a7a7a 65%,#666);border:1px solid #505050"></div>
<div class="a" style="left:581.8px;top:741.5px;width:48.6px;height:27.5px;border-radius:3px;background:rgb(128,128,128);box-shadow:0 0 0 1px rgba(60,60,60,.6)"></div>
<svg class="a" style="left:578.2px;top:770px" width="56" height="15"><text x="28" y="10.8" font-size="10.5" fill="#262626" stroke="#262626" stroke-width="0.25" text-anchor="middle">50</text></svg>
<div class="a" style="left:635.9px;top:738px;width:56px;height:46px;border-radius:4px;background:linear-gradient(#a4a4a4,#8c8c8c 30%,#7a7a7a 65%,#666);border:1px solid #505050"></div>
<div class="a" style="left:639.5px;top:741.5px;width:48.6px;height:27.5px;border-radius:3px;background:rgb(140,140,140);box-shadow:0 0 0 1px rgba(60,60,60,.6)"></div>
<svg class="a" style="left:635.9px;top:770px" width="56" height="15"><text x="28" y="10.8" font-size="10.5" fill="#262626" stroke="#262626" stroke-width="0.25" text-anchor="middle">55</text></svg>
<div class="a" style="left:693.6px;top:738px;width:56px;height:46px;border-radius:4px;background:linear-gradient(#a4a4a4,#8c8c8c 30%,#7a7a7a 65%,#666);border:1px solid #505050"></div>
<div class="a" style="left:697.2px;top:741.5px;width:48.6px;height:27.5px;border-radius:3px;background:rgb(153,153,153);box-shadow:0 0 0 1px rgba(60,60,60,.6)"></div>
<svg class="a" style="left:693.6px;top:770px" width="56" height="15"><text x="28" y="10.8" font-size="10.5" fill="#262626" stroke="#262626" stroke-width="0.25" text-anchor="middle">60</text></svg>
<div class="a" style="left:751.4px;top:738px;width:56px;height:46px;border-radius:4px;background:linear-gradient(#a4a4a4,#8c8c8c 30%,#7a7a7a 65%,#666);border:1px solid #505050"></div>
<div class="a" style="left:755.0px;top:741.5px;width:48.6px;height:27.5px;border-radius:3px;background:rgb(166,166,166);box-shadow:0 0 0 1px rgba(60,60,60,.6)"></div>
<svg class="a" style="left:751.4px;top:770px" width="56" height="15"><text x="28" y="10.8" font-size="10.5" fill="#262626" stroke="#262626" stroke-width="0.25" text-anchor="middle">65</text></svg>
<div class="a" style="left:809.1px;top:738px;width:56px;height:46px;border-radius:4px;background:linear-gradient(#a4a4a4,#8c8c8c 30%,#7a7a7a 65%,#666);border:1px solid #505050"></div>
<div class="a" style="left:812.7px;top:741.5px;width:48.6px;height:27.5px;border-radius:3px;background:rgb(178,178,178);box-shadow:0 0 0 1px rgba(60,60,60,.6)"></div>
<svg class="a" style="left:809.1px;top:770px" width="56" height="15"><text x="28" y="10.8" font-size="10.5" fill="#262626" stroke="#262626" stroke-width="0.25" text-anchor="middle">70</text></svg>
<div class="a" style="left:866.8px;top:738px;width:56px;height:46px;border-radius:4px;background:linear-gradient(#a4a4a4,#8c8c8c 30%,#7a7a7a 65%,#666);border:1px solid #505050"></div>
<div class="a" style="left:870.4px;top:741.5px;width:48.6px;height:27.5px;border-radius:3px;background:rgb(191,191,191);box-shadow:0 0 0 1px rgba(60,60,60,.6)"></div>
<svg class="a" style="left:866.8px;top:770px" width="56" height="15"><text x="28" y="10.8" font-size="10.5" fill="#262626" stroke="#262626" stroke-width="0.25" text-anchor="middle">75</text></svg>
<div class="a" style="left:924.5px;top:738px;width:56px;height:46px;border-radius:4px;background:linear-gradient(#a4a4a4,#8c8c8c 30%,#7a7a7a 65%,#666);border:1px solid #505050"></div>
<div class="a" style="left:928.1px;top:741.5px;width:48.6px;height:27.5px;border-radius:3px;background:rgb(204,204,204);box-shadow:0 0 0 1px rgba(60,60,60,.6)"></div>
<svg class="a" style="left:924.5px;top:770px" width="56" height="15"><text x="28" y="10.8" font-size="10.5" fill="#262626" stroke="#262626" stroke-width="0.25" text-anchor="middle">80</text></svg>
<div class="a" style="left:982.2px;top:738px;width:56px;height:46px;border-radius:4px;background:linear-gradient(#a4a4a4,#8c8c8c 30%,#7a7a7a 65%,#666);border:1px solid #505050"></div>
<div class="a" style="left:985.8px;top:741.5px;width:48.6px;height:27.5px;border-radius:3px;background:rgb(217,217,217);box-shadow:0 0 0 1px rgba(60,60,60,.6)"></div>
<svg class="a" style="left:982.2px;top:770px" width="56" height="15"><text x="28" y="10.8" font-size="10.5" fill="#262626" stroke="#262626" stroke-width="0.25" text-anchor="middle">85</text></svg>
<div class="a" style="left:1040.0px;top:738px;width:56px;height:46px;border-radius:4px;background:linear-gradient(#a4a4a4,#8c8c8c 30%,#7a7a7a 65%,#666);border:1px solid #505050"></div>
<div class="a" style="left:1043.6px;top:741.5px;width:48.6px;height:27.5px;border-radius:3px;background:rgb(230,230,230);box-shadow:0 0 0 1px rgba(60,60,60,.6)"></div>
<svg class="a" style="left:1040.0px;top:770px" width="56" height="15"><text x="28" y="10.8" font-size="10.5" fill="#262626" stroke="#262626" stroke-width="0.25" text-anchor="middle">90</text></svg>
<div class="a" style="left:1097.7px;top:738px;width:56px;height:46px;border-radius:4px;background:linear-gradient(#a4a4a4,#8c8c8c 30%,#7a7a7a 65%,#666);border:1px solid #505050"></div>
<div class="a" style="left:1101.3px;top:741.5px;width:48.6px;height:27.5px;border-radius:3px;background:rgb(242,242,242);box-shadow:0 0 0 1px rgba(60,60,60,.6)"></div>
<svg class="a" style="left:1097.7px;top:770px" width="56" height="15"><text x="28" y="10.8" font-size="10.5" fill="#262626" stroke="#262626" stroke-width="0.25" text-anchor="middle">95</text></svg>
<div class="a" style="left:1156px;top:738px;width:56px;height:47px;border-radius:4px 4px 0 0;background:#2c2c2c;border:1px solid #1e1e1e"></div>
<div class="a" style="left:1159.6px;top:741.5px;width:49px;height:27.7px;border-radius:3px;background:#fff"></div>
<svg class="a" style="left:1156px;top:770px" width="56" height="15"><text x="28" y="11" font-size="10.5" font-weight="bold" fill="#fff" text-anchor="middle">100</text></svg>
<div class="a" style="left:1214px;top:738px;width:37px;height:13px;border-radius:3px 3px 0 0;background:linear-gradient(#a6a6a6,#7c7c7c);border:1px solid #555"></div>
<div class="a" style="left:1214px;top:751px;width:37px;height:34px;background:linear-gradient(#929292,#6c6c6c);border:1px solid #555;border-top:1px solid #666"></div>
<svg class="a" style="left:1214px;top:738px" width="37" height="47">
<circle cx="18.5" cy="7" r="5.5" fill="#8a8a8a"/><path d="M15.5 8.5 L18.5 5.5 L21.5 8.5Z" fill="#333"/>
<rect x="7.5" y="18.8" width="22" height="22.5" rx="3" fill="#a0a0a0" stroke="#1e1e1e" stroke-width="1.8"/>
<rect x="13.3" y="25" width="10.6" height="10" fill="#262626"/><rect x="13.3" y="30" width="10.6" height="5" fill="#000"/>
</svg>
<div class="a" style="left:1252px;top:738px;width:35px;height:22px;background:linear-gradient(#a8a8a8,#8a8a8a 50%,#707070);border:1px solid #4a4a4a;border-radius:2px 2px 0 0"></div>
<div class="a" style="left:1287.5px;top:738px;width:34.0px;height:22px;background:linear-gradient(#a8a8a8,#8a8a8a 50%,#707070);border:1px solid #4a4a4a;border-radius:2px 2px 0 0"></div>
<div class="a" style="left:1322px;top:738px;width:33.5px;height:22px;background:linear-gradient(#a8a8a8,#8a8a8a 50%,#707070);border:1px solid #4a4a4a;border-radius:2px 2px 0 0"></div>
<div class="a" style="left:1356px;top:738px;width:34px;height:22px;background:linear-gradient(#a8a8a8,#8a8a8a 50%,#707070);border:1px solid #4a4a4a;border-radius:2px 2px 0 0"></div>
<div class="a" style="left:1390px;top:738px;width:34px;height:22px;background:#2c2c2c;border:1px solid #4a4a4a;border-radius:2px 2px 0 0"></div>
<div class="a" style="left:1424px;top:738px;width:36px;height:22px;background:linear-gradient(#a8a8a8,#8a8a8a 50%,#707070);border:1px solid #4a4a4a;border-radius:2px 2px 0 0"></div>
<svg class="a" style="left:1252px;top:738px" width="208" height="47"><defs><linearGradient id="cg" x1="0" y1="0" x2="0" y2="1"><stop offset="0" stop-color="#6c6c6c"/><stop offset="1" stop-color="#9a9a9a"/></linearGradient><linearGradient id="cgd" x1="0" y1="0" x2="0" y2="1"><stop offset="0" stop-color="#202020"/><stop offset="1" stop-color="#3a3a3a"/></linearGradient></defs><circle cx="17" cy="10.5" r="7.8" fill="#7e7e7e"/><circle cx="17" cy="10.0" r="7.0" fill="url(#cg)"/><rect x="13.8" y="7.5" width="6.4" height="6.4" fill="#2a2a2a"/><circle cx="52" cy="10.5" r="7.8" fill="#7e7e7e"/><circle cx="52" cy="10.0" r="7.0" fill="url(#cg)"/><path d="M49.5 6.8 L56 10.7 L49.5 14.6Z" fill="#222"/><circle cx="86" cy="10.5" r="7.8" fill="#7e7e7e"/><circle cx="86" cy="10.0" r="7.0" fill="url(#cg)"/><path d="M82.5 7 H81 V14.5 H82.5 M89.5 7 H91 V14.5 H89.5 M83.5 10.7 H88.5" fill="none" stroke="#222" stroke-width="1.2"/><circle cx="120" cy="10.5" r="7.8" fill="#7e7e7e"/><circle cx="120" cy="10.0" r="7.0" fill="url(#cg)"/><path d="M120 10.5 C118 7.5 114.8 7.8 114.8 10.5 C114.8 13.2 118 13.5 120 10.5 C122 7.5 125.2 7.8 125.2 10.5 C125.2 13.2 122 13.5 120 10.5Z" fill="none" stroke="#222" stroke-width="1.5"/><circle cx="155" cy="10.5" r="7.8" fill="url(#cgd)"/><path d="M151 9.5 A4.3 4.3 0 0 1 158.8 8.5 M159 11.5 A4.3 4.3 0 0 1 151.2 12.5" fill="none" stroke="#141414" stroke-width="1.5"/><path d="M157 6 L160 9 L156.5 9.5Z M153 15 L150 12 L153.5 11.5Z" fill="#141414"/><circle cx="189.5" cy="10.5" r="8.2" fill="#7e7e7e"/><circle cx="189.5" cy="10.0" r="7.3999999999999995" fill="url(#cg)"/></svg>
<div class="a" style="left:1252px;top:761px;width:104px;height:24px;background:linear-gradient(#acacac,#8e8e8e 50%,#747474);border:1px solid #4a4a4a;border-radius:3px 3px 0 0"></div>
<div class="a" style="left:1356px;top:761px;width:104px;height:24px;background:linear-gradient(#acacac,#8e8e8e 50%,#747474);border:1px solid #4a4a4a;border-radius:3px 3px 0 0"></div>
<svg class="a" style="left:1252px;top:761px" width="208" height="24"><defs><linearGradient id="cg2" x1="0" y1="0" x2="0" y2="1"><stop offset="0" stop-color="#6e6e6e"/><stop offset="1" stop-color="#a0a0a0"/></linearGradient></defs><circle cx="23" cy="11.7" r="7.8" fill="url(#cg2)"/><path d="M23.5 8 L20 11.7 L23.5 15.4 M27 8 L23.5 11.7 L27 15.4" fill="none" stroke="#2a2a2a" stroke-width="1.3"/><circle cx="185" cy="11.7" r="7.8" fill="url(#cg2)"/><path d="M180.5 8 L184 11.7 L180.5 15.4 M184 8 L187.5 11.7 L184 15.4" fill="none" stroke="#2a2a2a" stroke-width="1.3"/><text x="43" y="18.3" font-size="17.5" fill="#262626" stroke="#262626" stroke-width="0.5" textLength="39" lengthAdjust="spacingAndGlyphs">Back</text><text x="124.3" y="18.3" font-size="17.5" fill="#262626" stroke="#262626" stroke-width="0.5" textLength="39.5" lengthAdjust="spacingAndGlyphs">Next</text></svg>
</body></html>
